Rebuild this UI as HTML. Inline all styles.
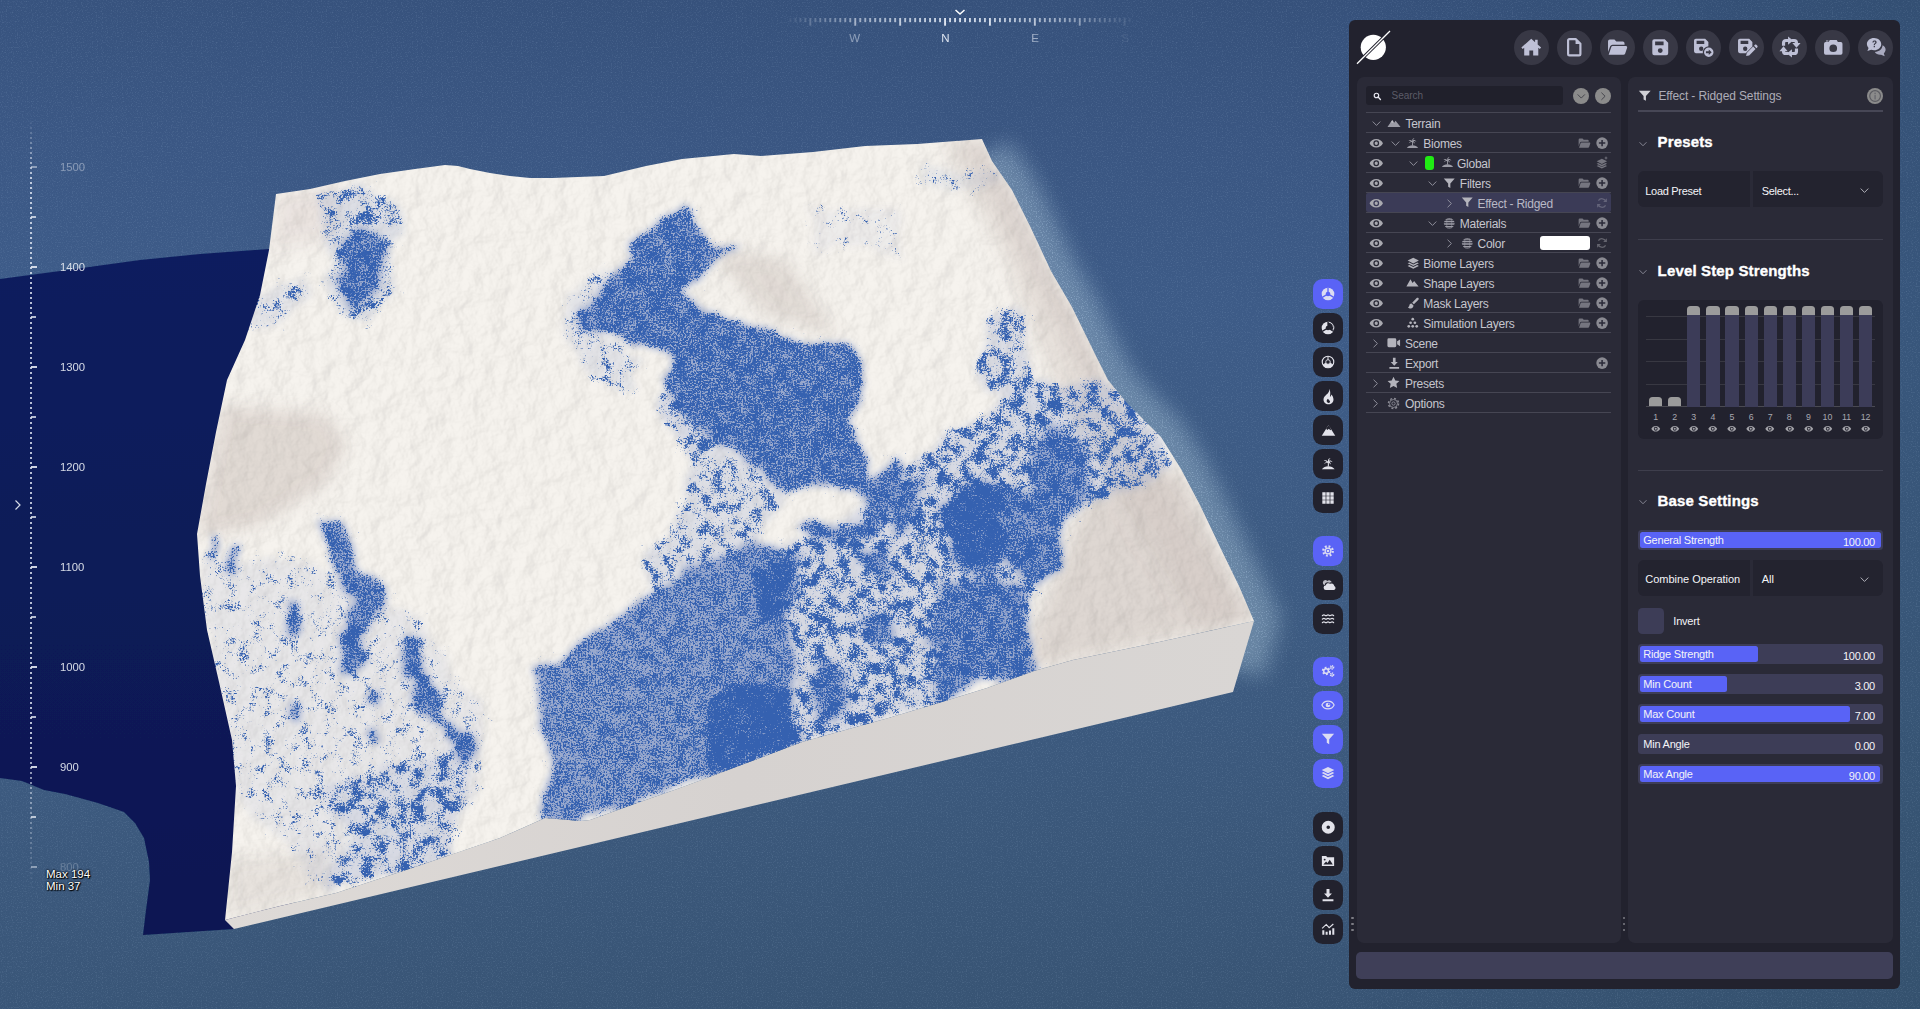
<!DOCTYPE html>
<html><head><meta charset="utf-8"><title>Terrain Editor</title><style>
html,body{margin:0;padding:0}
body{width:1920px;height:1009px;overflow:hidden;position:relative;background:#3c5a85;font-family:"Liberation Sans",sans-serif}
#scene{position:absolute;left:0;top:0}
.i{position:absolute;overflow:visible}
.t{position:absolute;white-space:nowrap;font-size:12px;line-height:20px;color:#c6c6ce;letter-spacing:-.25px}
.t.w{color:#f4f4f8;font-size:11px;letter-spacing:-.2px}
.t.h{color:#fff;font-weight:bold;-webkit-text-stroke:.35px #fff;font-size:15px;line-height:22px;letter-spacing:.15px}
.ruler{position:absolute;left:30.300px;top:117px;width:2px;height:775px;background:repeating-linear-gradient(180deg,rgba(226,232,244,.8) 0,rgba(226,232,244,.8) 2px,transparent 2px,transparent 5px);-webkit-mask-image:linear-gradient(180deg,transparent 0,#000 8%,#000 80%,rgba(0,0,0,.5) 90%,transparent 100%)}
.tk{position:absolute;left:31px;height:2px;background:#dde3ee}
.rl{position:absolute;left:60px;font-size:11.300px;line-height:20px;color:#e4e8f0}
.mm{position:absolute;font-size:11.500px;line-height:12px;color:#fff;text-shadow:0 0 2px #000,0 0 2px #000,1px 1px 1px #000}
.tbb{position:absolute;left:1313.300px;width:29.500px;height:29.500px;border-radius:9.500px}
.panel{position:absolute;left:1349px;top:19.700px;width:551px;height:969px;background:#22222e;border-radius:6px}
.cb{position:absolute;width:35px;height:35px;border-radius:50%;background:#383845}
.ip{position:absolute;top:77.300px;height:866px;background:#2a2a37;border-radius:7px}
.dd{position:absolute;width:2.200px;height:2.200px;border-radius:50%;background:#7c7c84}
.bbar{position:absolute;left:1356px;top:952.200px;width:537px;height:26.600px;border-radius:5px;background:#3f3f58}
.sbox{position:absolute;left:1365.800px;top:85.500px;width:196.800px;height:19px;border-radius:3px;background:#20202b}
.gc{position:absolute;width:16.200px;height:16.200px;border-radius:50%;background:#8b8b8b}
.sep{position:absolute;left:1365.800px;width:245.200px;height:1px;background:#464653}
.hl{position:absolute;left:1365.800px;top:192.800px;width:245.200px;height:19.600px;background:#3b3b57;border-radius:2px}
.pill{position:absolute;left:1424.500px;top:156px;width:9px;height:14px;border-radius:3px;background:#20ec14}
.wbox{position:absolute;left:1540px;top:235.800px;width:50px;height:14.200px;border-radius:3px;background:#fff}
.rs{position:absolute;left:1638px;width:245px;height:1px;background:#3e3e4c}
.sl,.sr{position:absolute;height:35.600px;background:#23232f}
.sl{left:1638px;width:112px;border-radius:6px 0 0 6px}
.sr{left:1753px;width:130px;border-radius:0 6px 6px 0}
.chart{position:absolute;left:1638px;top:299.700px;width:245px;height:139.300px;border-radius:6px;background:#22222e}
.gl{position:absolute;left:1645.800px;width:229.400px;height:1px;background:#383842}
.bar{position:absolute;top:314.500px;width:13.300px;height:92px;background:#3c3c58}
.cap{position:absolute;width:13.300px;background:#9b9b9b;border-radius:3.500px 3.500px 0 0}
.cn{position:absolute;top:411.400px;width:20px;text-align:center;font-size:8.800px;line-height:12px;color:#a8a8b0}
.so{position:absolute;left:1638px;width:245px;height:19.500px;border-radius:3.500px;background:#3d3d57}
.sf{position:absolute;left:1640.400px;height:15.400px;border-radius:2.500px;background:#5963f6}
.cbx{position:absolute;left:1638.300px;top:608.200px;width:25.700px;height:25.400px;border-radius:4.500px;background:#3d3d57}
</style></head><body>
<svg id="scene" width="1920" height="1009" viewBox="0 0 1920 1009">
<defs>
<linearGradient id="bg" x1="0" y1="0" x2="0" y2="1">
<stop offset="0" stop-color="#36517b"/><stop offset=".14" stop-color="#3a5682"/><stop offset=".3" stop-color="#3d5b87"/><stop offset=".6" stop-color="#3d5b82"/><stop offset=".8" stop-color="#3b587b"/><stop offset="1" stop-color="#385474"/></linearGradient>
<linearGradient id="bgh" x1="0" y1="0" x2="1" y2="0"><stop offset="0" stop-color="#4a6ca6" stop-opacity=".08"/><stop offset=".45" stop-color="#4a6ca6" stop-opacity="0"/><stop offset=".7" stop-color="#2c4a60" stop-opacity="0"/><stop offset="1" stop-color="#2c4a60" stop-opacity=".3"/></linearGradient>
<linearGradient id="shg" x1="0" y1="0" x2="0" y2="1"><stop offset="0" stop-color="#0d1e5e"/><stop offset="1" stop-color="#091752"/></linearGradient>
<linearGradient id="sideg" x1="0" y1="0" x2="1" y2="0"><stop offset="0" stop-color="#dedad7"/><stop offset=".5" stop-color="#d6d2d0"/><stop offset="1" stop-color="#d9d6d4"/></linearGradient>
<clipPath id="topclip"><polygon points="276,194 310,189 345,181 380,174 415,169 445,165 458,166 470,169 490,173 510,176 530,178 552,178 578,177 604,176 625,171 646,166 682,159 734,154 761,156 813,152 865,146 891,145 917,144 982,139 992,161 1012,190 1030,226 1051,271 1072,307 1095,354 1108,380 1127,403 1161,437 1181,469 1200,505 1220,547 1239,586 1254,621 1200,633 1150,644 1073,660 1034,671 987,688 942,702 885,719 802,742 760,758 720,773 680,788 640,802 590,820 581,821 545,818 500,838 412,868 336,893 280,906 225,920 228,891 232,852 236,786 232,740 219,682 207,630 200,576 197,534 206,484 216,432 227,380 245,340 260,295 269,250"/></clipPath>
<filter id="fblue" filterUnits="userSpaceOnUse" x="180" y="120" width="1100" height="830" color-interpolation-filters="sRGB">
<feTurbulence type="fractalNoise" baseFrequency="0.018" numOctaves="4" seed="7" result="n1"/>
<feDisplacementMap in="SourceGraphic" in2="n1" scale="34" xChannelSelector="R" yChannelSelector="G" result="d"/>
<feGaussianBlur in="d" stdDeviation="2.5" result="soft"/>
<feTurbulence type="fractalNoise" baseFrequency="0.08" numOctaves="3" seed="21" result="n3"/>
<feColorMatrix in="n3" type="matrix" values="0 0 0 0 0 0 0 0 0 0 0 0 0 0 0 1.8 0 0 0 -0.4" result="a3"/>
<feTurbulence type="fractalNoise" baseFrequency="0.6" numOctaves="2" seed="3" result="n2"/>
<feColorMatrix in="n2" type="matrix" values="0 0 0 0 0 0 0 0 0 0 0 0 0 0 0 0 1.8 0 0 -0.4" result="a2"/>
<feComposite in="soft" in2="a3" operator="arithmetic" k1="0" k2="1" k3="0.7" k4="-0.35" result="s1"/>
<feComposite in="s1" in2="a2" operator="arithmetic" k1="0" k2="1" k3="0.6" k4="-0.3" result="s2"/>
<feComponentTransfer in="s2" result="th"><feFuncA type="linear" slope="4" intercept="-1.75"/></feComponentTransfer>
<feGaussianBlur in="d" stdDeviation="7" result="w"/>
<feComponentTransfer in="w" result="wm"><feFuncA type="linear" slope="40" intercept="-0.6"/></feComponentTransfer>
<feComposite in="th" in2="wm" operator="in" result="th2"/>
<feFlood flood-color="#3561b0" result="col"/>
<feComposite in="col" in2="th2" operator="in"/>
</filter>
<filter id="fblue2" filterUnits="userSpaceOnUse" x="180" y="120" width="1100" height="830" color-interpolation-filters="sRGB">
<feTurbulence type="fractalNoise" baseFrequency="0.018" numOctaves="4" seed="7" result="n1"/>
<feDisplacementMap in="SourceGraphic" in2="n1" scale="34" xChannelSelector="R" yChannelSelector="G" result="d"/>
<feGaussianBlur in="d" stdDeviation="2.5" result="soft"/>
<feTurbulence type="fractalNoise" baseFrequency="0.08" numOctaves="3" seed="21" result="n3"/>
<feColorMatrix in="n3" type="matrix" values="0 0 0 0 0 0 0 0 0 0 0 0 0 0 0 1.8 0 0 0 -0.4" result="a3"/>
<feTurbulence type="fractalNoise" baseFrequency="0.6" numOctaves="2" seed="3" result="n2"/>
<feColorMatrix in="n2" type="matrix" values="0 0 0 0 0 0 0 0 0 0 0 0 0 0 0 0 1.8 0 0 -0.4" result="a2"/>
<feComposite in="soft" in2="a3" operator="arithmetic" k1="0" k2="1" k3="0.32" k4="-0.16" result="s1"/>
<feComposite in="s1" in2="a2" operator="arithmetic" k1="0" k2="1" k3="0.8" k4="-0.4" result="s2"/>
<feComponentTransfer in="s2" result="th"><feFuncA type="linear" slope="4" intercept="-1.75"/></feComponentTransfer>
<feGaussianBlur in="d" stdDeviation="7" result="w"/>
<feComponentTransfer in="w" result="wm"><feFuncA type="linear" slope="40" intercept="-0.6"/></feComponentTransfer>
<feComposite in="th" in2="wm" operator="in" result="th2"/>
<feFlood flood-color="#3561b0" result="col"/>
<feComposite in="col" in2="th2" operator="in"/>
</filter>
<filter id="fsnow" filterUnits="userSpaceOnUse" x="180" y="120" width="1100" height="830" color-interpolation-filters="sRGB">
<feTurbulence type="fractalNoise" baseFrequency="0.05" numOctaves="5" seed="11" result="n"/>
<feDiffuseLighting in="n" surfaceScale="6" diffuseConstant="1" lighting-color="#ffffff" result="l"><feDistantLight azimuth="20" elevation="55"/></feDiffuseLighting>
<feComposite in="l" in2="SourceAlpha" operator="in"/>
</filter>
<filter id="fgrain" filterUnits="userSpaceOnUse" x="0" y="0" width="1920" height="1009" color-interpolation-filters="sRGB">
<feTurbulence type="fractalNoise" baseFrequency="0.8" numOctaves="1" seed="5" result="n"/>
<feColorMatrix in="n" type="matrix" values="0 0 0 0 .75 0 0 0 0 .85 0 0 0 0 .95 0 0 0 3 -1.55"/>
</filter>
<filter id="b7" filterUnits="userSpaceOnUse" x="180" y="120" width="1100" height="830"><feTurbulence type="fractalNoise" baseFrequency="0.018" numOctaves="4" seed="7" result="n1"/><feDisplacementMap in="SourceGraphic" in2="n1" scale="34" xChannelSelector="R" yChannelSelector="G" result="d"/><feGaussianBlur in="d" stdDeviation="3.5"/></filter>
<filter id="b8" filterUnits="userSpaceOnUse" x="180" y="120" width="1100" height="830"><feTurbulence type="fractalNoise" baseFrequency="0.05" numOctaves="4" seed="4" result="n1"/><feDisplacementMap in="SourceGraphic" in2="n1" scale="22" xChannelSelector="R" yChannelSelector="G" result="d"/><feGaussianBlur in="d" stdDeviation="1.6"/></filter>
<filter id="b6"><feGaussianBlur stdDeviation="8"/></filter>
<filter id="b14" x="-50%" y="-50%" width="200%" height="200%"><feGaussianBlur stdDeviation="10"/></filter>
<filter id="b1"><feGaussianBlur stdDeviation="0.6"/></filter>
<mask id="glowmask"><rect width="1920" height="1009" fill="#000"/><polyline points="988,152 992,161 1012,190 1030,226 1051,271 1072,307 1095,354 1108,380 1127,403 1161,437 1181,469 1200,505 1220,547 1239,586 1254,621 1240,670" fill="none" stroke="#fff" stroke-width="50" filter="url(#b14)"/></mask>
</defs>
<rect width="1920" height="1009" fill="url(#bg)"/><rect width="1920" height="1009" fill="url(#bgh)"/>
<rect width="1920" height="1009" fill="#fff" filter="url(#fgrain)" opacity=".15"/>
<g mask="url(#glowmask)"><rect x="900" y="100" width="500" height="700" fill="#a9c6d6" opacity=".4"/><rect x="900" y="100" width="500" height="700" fill="#fff" filter="url(#fgrain)" opacity=".35"/></g>
<polygon points="0,279 60,271 140,260 200,254 269,249 300,250 300,900 234,929 143,935 146,910 150,880 149,862 144,838 135,823 124,812 98,803 65,794 44,790 22,781 0,778" fill="url(#shg)" filter="url(#b1)"/>
<polygon points="1254,621 1200,633 1150,644 1073,660 1034,671 987,688 942,702 885,719 802,742 760,758 720,773 680,788 640,802 590,820 581,821 545,818 500,838 412,868 336,893 280,906 225,920 234,929 1233,692" fill="url(#sideg)"/>
<g clip-path="url(#topclip)">
<rect x="180" y="120" width="1100" height="830" fill="#f6f3ee"/>
<g filter="url(#b6)">
<polygon points="222,406 326,414 347,445 326,484 258,526 197,536" fill="#cfc5bf" opacity="0.55"/>
<polygon points="940,139 982,139 1108,380 1254,621 1200,633 1130,520 1060,400 1000,250" fill="#cfc5bf" opacity="0.4"/>
<polygon points="966,140 982,139 992,161 1012,190 1030,226 1051,271 1072,307 1095,354 1108,380 1090,384 1070,345 1046,300 1024,255 1004,215 985,180" fill="#d3cac5" opacity="0.75"/>
<polygon points="1082,508 1120,480 1181,469 1254,621 1073,660 1034,671 1030,640 1062,560" fill="#cfc5bf" opacity="0.6"/>
<polygon points="708,247 787,260 839,338 761,312" fill="#cfc5bf" opacity="0.5"/>
<polygon points="225,860 330,850 330,893 225,920" fill="#cfc5bf" opacity="0.35"/>
<polygon points="276,194 340,185 330,240 270,250" fill="#cfc5bf" opacity="0.3"/>
</g>
<rect x="180" y="120" width="1100" height="830" fill="#fff" filter="url(#fsnow)" opacity=".09" style="mix-blend-mode:multiply"/>
<g filter="url(#b7)">
<polygon points="350,227 370,235 385,250 380,280 362,305 350,308 337,285 334,260 342,240" fill="#8a9cc8" opacity="0.85"/>
<polygon points="320,200 360,190 400,200 405,235 390,250 395,290 370,320 340,315 325,280 330,240" fill="#8a9cc8" opacity="0.23"/>
<polygon points="255,290 300,285 310,310 270,330 250,320" fill="#8a9cc8" opacity="0.17"/>
<polygon points="682,206 667,213 622,234 630,252 609,276 581,307 589,323 622,338 667,354 656,380 682,401 703,424 709,443 735,453 761,469 787,489 820,490 852,484 870,470 860,440 849,427 860,406 865,380 865,370 847,351 808,344 761,328 708,312 688,292 698,276 727,252 745,237 722,245 690,229" fill="#8a9cc8" opacity="0.85"/>
<polygon points="662,393 700,400 712,445 690,450 665,420" fill="#8a9cc8" opacity="0.28"/>
<polygon points="690,440 760,470 790,500 760,535 700,570 660,600 640,560 690,500" fill="#8a9cc8" opacity="0.22"/>
<polygon points="560,290 600,270 600,330 640,360 640,400 600,380 570,340" fill="#8a9cc8" opacity="0.17"/>
<polygon points="755,534 719,557 682,578 646,599 597,630 579,643 535,680 542,734 548,776 545,818 581,821 680,788 760,758 802,742 800,700 776,604 795,573 787,557" fill="#8a9cc8" opacity="0.85"/>
<polygon points="742,560 800,540 900,466 978,414 1017,385 1108,380 1127,403 1161,437 1174,466 1108,497 1082,508 1056,562 1030,588 1030,643 1034,671 987,688 942,702 885,719 802,742 790,650" fill="#8a9cc8" opacity="0.28"/>
<polygon points="942,510 965,489 1004,484 1025,489 1046,432 1082,440 1093,458 1093,489 1077,515 1061,557 1030,583 1009,562 978,568 947,547" fill="#8a9cc8" opacity="0.85"/>
<polygon points="900,484 921,479 916,536 900,541" fill="#8a9cc8" opacity="0.85"/>
<polygon points="947,588 1025,583 1030,640 1034,664 974,690 932,701 940,659 922,638" fill="#8a9cc8" opacity="0.85"/>
<polygon points="855,479 891,458 901,495 905,515 880,526 839,536 808,542 797,526 839,521 870,510" fill="#8a9cc8" opacity="0.85"/>
<polygon points="943,505 969,484 1000,484 1000,589 982,578 956,562 943,526" fill="#8a9cc8" opacity="0.85"/>
<polygon points="855,542 886,547 886,578 865,573" fill="#8a9cc8" opacity="0.85"/>
<polygon points="760,560 799,560 786,612 760,625" fill="#8a9cc8" opacity="0.85"/>
<polygon points="760,706 794,716 802,740 760,755" fill="#8a9cc8" opacity="0.85"/>
<polygon points="864,612 895,617 901,646 877,646" fill="#8a9cc8" opacity="0.85"/>
<polygon points="820,659 846,669 838,716 820,727" fill="#8a9cc8" opacity="0.85"/>
<polygon points="702,696 800,690 800,745 740,765 705,769" fill="#8a9cc8" opacity="0.85"/>
<polygon points="985,318 1015,305 1033,330 1033,370 1020,393 990,393 975,360" fill="#8a9cc8" opacity="0.25"/>
<polygon points="924,168 1000,170 1005,190 930,188" fill="#8a9cc8" opacity="0.14"/>
<polygon points="804,204 903,210 903,255 810,250" fill="#8a9cc8" opacity="0.08"/>
<polygon points="317,517 334,515 360,547 356,560 386,585 382,612 366,638 346,638 348,602 332,568 321,538" fill="#8a9cc8" opacity="0.85"/>
<polygon points="339,630 362,630 360,677 342,680" fill="#8a9cc8" opacity="0.85"/>
<polygon points="404,640 422,638 422,669 441,690 441,713 456,729 475,740 475,760 461,776 451,740 430,716 412,695 415,680 402,682" fill="#8a9cc8" opacity="0.85"/>
<polygon points="206,547 214,547 214,562 206,562" fill="#8a9cc8" opacity="0.85"/>
<polygon points="230,549 240,549 240,573 230,573" fill="#8a9cc8" opacity="0.85"/>
<polygon points="287,599 302,599 302,635 287,635" fill="#8a9cc8" opacity="0.85"/>
<polygon points="287,698 300,698 300,716 287,716" fill="#8a9cc8" opacity="0.85"/>
<polygon points="368,692 383,692 383,708 368,708" fill="#8a9cc8" opacity="0.85"/>
<polygon points="362,734 373,734 373,747 362,747" fill="#8a9cc8" opacity="0.85"/>
<polygon points="200,560 300,560 420,620 480,700 480,800 440,860 330,890 240,800 215,680" fill="#8a9cc8" opacity="0.13"/>
<polygon points="323,786 467,747 467,812 441,859 412,870 323,891 347,838" fill="#8a9cc8" opacity="0.17"/>
</g>
<g filter="url(#fblue)">
<polygon points="320,200 360,190 400,200 405,235 390,250 395,290 370,320 340,315 325,280 330,240" fill="#000" fill-opacity="0.42"/>
<polygon points="255,290 300,285 310,310 270,330 250,320" fill="#000" fill-opacity="0.3"/>
<polygon points="662,393 700,400 712,445 690,450 665,420" fill="#000" fill-opacity="0.5"/>
<polygon points="690,440 760,470 790,500 760,535 700,570 660,600 640,560 690,500" fill="#000" fill-opacity="0.4"/>
<polygon points="560,290 600,270 600,330 640,360 640,400 600,380 570,340" fill="#000" fill-opacity="0.3"/>
<polygon points="742,560 800,540 900,466 978,414 1017,385 1108,380 1127,403 1161,437 1174,466 1108,497 1082,508 1056,562 1030,588 1030,643 1034,671 987,688 942,702 885,719 802,742 790,650" fill="#000" fill-opacity="0.5"/>
<polygon points="985,318 1015,305 1033,330 1033,370 1020,393 990,393 975,360" fill="#000" fill-opacity="0.45"/>
<polygon points="924,168 1000,170 1005,190 930,188" fill="#000" fill-opacity="0.25"/>
<polygon points="804,204 903,210 903,255 810,250" fill="#000" fill-opacity="0.15"/>
<polygon points="200,560 300,560 420,620 480,700 480,800 440,860 330,890 240,800 215,680" fill="#000" fill-opacity="0.24"/>
<polygon points="323,786 467,747 467,812 441,859 412,870 323,891 347,838" fill="#000" fill-opacity="0.3"/>
</g>
<g filter="url(#fblue2)">
<polygon points="350,227 370,235 385,250 380,280 362,305 350,308 337,285 334,260 342,240" fill="#000" fill-opacity="0.664"/>
<polygon points="682,206 667,213 622,234 630,252 609,276 581,307 589,323 622,338 667,354 656,380 682,401 703,424 709,443 735,453 761,469 787,489 820,490 852,484 870,470 860,440 849,427 860,406 865,380 865,370 847,351 808,344 761,328 708,312 688,292 698,276 727,252 745,237 722,245 690,229" fill="#000" fill-opacity="0.664"/>
<polygon points="755,534 719,557 682,578 646,599 597,630 579,643 535,680 542,734 548,776 545,818 581,821 680,788 760,758 802,742 800,700 776,604 795,573 787,557" fill="#000" fill-opacity="0.553"/>
<polygon points="942,510 965,489 1004,484 1025,489 1046,432 1082,440 1093,458 1093,489 1077,515 1061,557 1030,583 1009,562 978,568 947,547" fill="#000" fill-opacity="0.632"/>
<polygon points="900,484 921,479 916,536 900,541" fill="#000" fill-opacity="0.632"/>
<polygon points="947,588 1025,583 1030,640 1034,664 974,690 932,701 940,659 922,638" fill="#000" fill-opacity="0.632"/>
<polygon points="855,479 891,458 901,495 905,515 880,526 839,536 808,542 797,526 839,521 870,510" fill="#000" fill-opacity="0.632"/>
<polygon points="943,505 969,484 1000,484 1000,589 982,578 956,562 943,526" fill="#000" fill-opacity="0.632"/>
<polygon points="855,542 886,547 886,578 865,573" fill="#000" fill-opacity="0.632"/>
<polygon points="760,560 799,560 786,612 760,625" fill="#000" fill-opacity="0.632"/>
<polygon points="760,706 794,716 802,740 760,755" fill="#000" fill-opacity="0.632"/>
<polygon points="864,612 895,617 901,646 877,646" fill="#000" fill-opacity="0.632"/>
<polygon points="820,659 846,669 838,716 820,727" fill="#000" fill-opacity="0.632"/>
<polygon points="702,696 800,690 800,745 740,765 705,769" fill="#000" fill-opacity="0.632"/>
<polygon points="317,517 334,515 360,547 356,560 386,585 382,612 366,638 346,638 348,602 332,568 321,538" fill="#000" fill-opacity="0.632"/>
<polygon points="339,630 362,630 360,677 342,680" fill="#000" fill-opacity="0.664"/>
<polygon points="404,640 422,638 422,669 441,690 441,713 456,729 475,740 475,760 461,776 451,740 430,716 412,695 415,680 402,682" fill="#000" fill-opacity="0.664"/>
<polygon points="206,547 214,547 214,562 206,562" fill="#000" fill-opacity="0.632"/>
<polygon points="230,549 240,549 240,573 230,573" fill="#000" fill-opacity="0.632"/>
<polygon points="287,599 302,599 302,635 287,635" fill="#000" fill-opacity="0.632"/>
<polygon points="287,698 300,698 300,716 287,716" fill="#000" fill-opacity="0.632"/>
<polygon points="368,692 383,692 383,708 368,708" fill="#000" fill-opacity="0.632"/>
<polygon points="362,734 373,734 373,747 362,747" fill="#000" fill-opacity="0.632"/>
</g>
</g>
</svg>
<div class="ruler"></div>
<div class="tk" style="top:165.7px;width:6px;opacity:0.5"></div>
<span class="rl" style="top:156.7px;opacity:0.45">1500</span>
<div class="tk" style="top:215.7px;width:5px;opacity:.8"></div>
<div class="tk" style="top:265.7px;width:6px;opacity:0.92"></div>
<span class="rl" style="top:256.7px;opacity:0.92">1400</span>
<div class="tk" style="top:315.7px;width:5px;opacity:.8"></div>
<div class="tk" style="top:365.7px;width:6px;opacity:0.92"></div>
<span class="rl" style="top:356.7px;opacity:0.92">1300</span>
<div class="tk" style="top:415.7px;width:5px;opacity:.8"></div>
<div class="tk" style="top:465.7px;width:6px;opacity:0.92"></div>
<span class="rl" style="top:456.7px;opacity:0.92">1200</span>
<div class="tk" style="top:515.7px;width:5px;opacity:.8"></div>
<div class="tk" style="top:565.7px;width:6px;opacity:0.92"></div>
<span class="rl" style="top:556.7px;opacity:0.92">1100</span>
<div class="tk" style="top:615.7px;width:5px;opacity:.8"></div>
<div class="tk" style="top:665.7px;width:6px;opacity:0.92"></div>
<span class="rl" style="top:656.7px;opacity:0.92">1000</span>
<div class="tk" style="top:715.7px;width:5px;opacity:.8"></div>
<div class="tk" style="top:765.7px;width:6px;opacity:0.92"></div>
<span class="rl" style="top:756.7px;opacity:0.92">900</span>
<div class="tk" style="top:815.7px;width:5px;opacity:.8"></div>
<div class="tk" style="top:865.7px;width:6px;opacity:0.5"></div>
<span class="rl" style="top:856.7px;opacity:0.25">800</span>
<span class="mm" style="left:46px;top:868px">Max 194</span><span class="mm" style="left:46px;top:880px">Min 37</span>
<svg class="i" style="left:13px;top:499px" width="10" height="12" viewBox="0 0 10 12"><polyline points="2.500,1.500 7,6 2.500,10.500" fill="none" stroke="#d5dbe8" stroke-width="1.200"/></svg>
<svg class="i" style="left:780px;top:0" width="360" height="50" viewBox="780 0 360 50"><defs><linearGradient id="cf" x1="0" x2="1"><stop offset="0" stop-color="#fff" stop-opacity="0"/><stop offset=".22" stop-color="#fff" stop-opacity=".65"/><stop offset=".5" stop-color="#fff" stop-opacity="1"/><stop offset=".78" stop-color="#fff" stop-opacity=".65"/><stop offset="1" stop-color="#fff" stop-opacity="0"/></linearGradient><mask id="cm"><rect x="780" y="0" width="360" height="50" fill="url(#cf)"/></mask></defs><g mask="url(#cm)" fill="#e6ecf6"><rect x="789.4" y="18" width="1.900" height="4.2" opacity="0.9"/><rect x="794.4" y="18" width="1.900" height="4.2" opacity="0.9"/><rect x="799.4" y="18" width="1.900" height="4.2" opacity="0.9"/><rect x="804.4" y="18" width="1.900" height="4.2" opacity="0.9"/><rect x="809.4" y="18" width="1.900" height="7.7" opacity="1"/><rect x="814.4" y="18" width="1.900" height="4.2" opacity="0.9"/><rect x="819.3" y="18" width="1.900" height="4.2" opacity="0.9"/><rect x="824.3" y="18" width="1.900" height="4.2" opacity="0.9"/><rect x="829.3" y="18" width="1.900" height="4.2" opacity="0.9"/><rect x="834.3" y="18" width="1.900" height="4.2" opacity="0.9"/><rect x="839.3" y="18" width="1.900" height="4.2" opacity="0.9"/><rect x="844.3" y="18" width="1.900" height="4.2" opacity="0.9"/><rect x="849.3" y="18" width="1.900" height="4.2" opacity="0.9"/><rect x="854.3" y="18" width="1.900" height="7.7" opacity="1"/><rect x="859.3" y="18" width="1.900" height="4.2" opacity="0.9"/><rect x="864.3" y="18" width="1.900" height="4.2" opacity="0.9"/><rect x="869.2" y="18" width="1.900" height="4.2" opacity="0.9"/><rect x="874.2" y="18" width="1.900" height="4.2" opacity="0.9"/><rect x="879.2" y="18" width="1.900" height="4.2" opacity="0.9"/><rect x="884.2" y="18" width="1.900" height="4.2" opacity="0.9"/><rect x="889.2" y="18" width="1.900" height="4.2" opacity="0.9"/><rect x="894.2" y="18" width="1.900" height="4.2" opacity="0.9"/><rect x="899.2" y="18" width="1.900" height="7.7" opacity="1"/><rect x="904.2" y="18" width="1.900" height="4.2" opacity="0.9"/><rect x="909.2" y="18" width="1.900" height="4.2" opacity="0.9"/><rect x="914.2" y="18" width="1.900" height="4.2" opacity="0.9"/><rect x="919.1" y="18" width="1.900" height="4.2" opacity="0.9"/><rect x="924.1" y="18" width="1.900" height="4.2" opacity="0.9"/><rect x="929.1" y="18" width="1.900" height="4.2" opacity="0.9"/><rect x="934.1" y="18" width="1.900" height="4.2" opacity="0.9"/><rect x="939.1" y="18" width="1.900" height="4.2" opacity="0.9"/><rect x="944.1" y="18" width="1.900" height="7.7" opacity="1"/><rect x="949.1" y="18" width="1.900" height="4.2" opacity="0.9"/><rect x="954.1" y="18" width="1.900" height="4.2" opacity="0.9"/><rect x="959.1" y="18" width="1.900" height="4.2" opacity="0.9"/><rect x="964.1" y="18" width="1.900" height="4.2" opacity="0.9"/><rect x="969.0" y="18" width="1.900" height="4.2" opacity="0.9"/><rect x="974.0" y="18" width="1.900" height="4.2" opacity="0.9"/><rect x="979.0" y="18" width="1.900" height="4.2" opacity="0.9"/><rect x="984.0" y="18" width="1.900" height="4.2" opacity="0.9"/><rect x="989.0" y="18" width="1.900" height="7.7" opacity="1"/><rect x="994.0" y="18" width="1.900" height="4.2" opacity="0.9"/><rect x="999.0" y="18" width="1.900" height="4.2" opacity="0.9"/><rect x="1004.0" y="18" width="1.900" height="4.2" opacity="0.9"/><rect x="1009.0" y="18" width="1.900" height="4.2" opacity="0.9"/><rect x="1014.0" y="18" width="1.900" height="4.2" opacity="0.9"/><rect x="1018.9" y="18" width="1.900" height="4.2" opacity="0.9"/><rect x="1023.9" y="18" width="1.900" height="4.2" opacity="0.9"/><rect x="1028.9" y="18" width="1.900" height="4.2" opacity="0.9"/><rect x="1033.9" y="18" width="1.900" height="7.7" opacity="1"/><rect x="1038.9" y="18" width="1.900" height="4.2" opacity="0.9"/><rect x="1043.9" y="18" width="1.900" height="4.2" opacity="0.9"/><rect x="1048.9" y="18" width="1.900" height="4.2" opacity="0.9"/><rect x="1053.9" y="18" width="1.900" height="4.2" opacity="0.9"/><rect x="1058.9" y="18" width="1.900" height="4.2" opacity="0.9"/><rect x="1063.9" y="18" width="1.900" height="4.2" opacity="0.9"/><rect x="1068.8" y="18" width="1.900" height="4.2" opacity="0.9"/><rect x="1073.8" y="18" width="1.900" height="4.2" opacity="0.9"/><rect x="1078.8" y="18" width="1.900" height="7.7" opacity="1"/><rect x="1083.8" y="18" width="1.900" height="4.2" opacity="0.9"/><rect x="1088.8" y="18" width="1.900" height="4.2" opacity="0.9"/><rect x="1093.8" y="18" width="1.900" height="4.2" opacity="0.9"/><rect x="1098.8" y="18" width="1.900" height="4.2" opacity="0.9"/><rect x="1103.8" y="18" width="1.900" height="4.2" opacity="0.9"/><rect x="1108.8" y="18" width="1.900" height="4.2" opacity="0.9"/><rect x="1113.8" y="18" width="1.900" height="4.2" opacity="0.9"/><rect x="1118.7" y="18" width="1.900" height="4.2" opacity="0.9"/><rect x="1123.7" y="18" width="1.900" height="7.7" opacity="1"/><rect x="1128.7" y="18" width="1.900" height="4.2" opacity="0.9"/><text x="854.7" y="41.600" text-anchor="middle" font-family="Liberation Sans,sans-serif" font-size="11.500" opacity="0.8">W</text><text x="945.4" y="41.600" text-anchor="middle" font-family="Liberation Sans,sans-serif" font-size="11.500" opacity="1">N</text><text x="1035.2" y="41.600" text-anchor="middle" font-family="Liberation Sans,sans-serif" font-size="11.500" opacity="0.8">E</text><text x="1125.3" y="41.600" text-anchor="middle" font-family="Liberation Sans,sans-serif" font-size="11.500" opacity="0.8">S</text></g><polyline points="955.500,10 960,14 964.500,10" fill="none" stroke="#fff" stroke-width="1.500"/></svg>
<div class="tbb" style="top:279.4px;background:#5a63f6"></div>
<svg class="i" style="left:1321.1px;top:287.1px;color:#dcdcf2;fill:#dcdcf2" width="14" height="14" viewBox="0 0 16 16"><circle cx="8" cy="8" r="7.200"/><path d="M8 8V.8M8 8 1.800 11.600M8 8l6.200 3.600" stroke="#5a63f6" stroke-width="1.500" fill="none"/><circle cx="8" cy="8" r="2.700" fill="#5a63f6"/></svg>
<div class="tbb" style="top:313.4px;background:#22222e"></div>
<svg class="i" style="left:1321.1px;top:321.1px;color:#e2e2ea;fill:#e2e2ea" width="14" height="14" viewBox="0 0 16 16"><circle cx="8" cy="8" r="7.200"/><path d="M8 8V.8A7.200 7.200 0 0 1 14.200 11.600z" fill="#22222e"/><path d="M8 8V.8M8 8 1.800 11.600M8 8l6.200 3.600" stroke="#22222e" stroke-width="1.500" fill="none"/><circle cx="8" cy="8" r="2.700" fill="#22222e"/><path d="M8.800 1.200A6.800 6.800 0 0 1 13.800 10.600" fill="none" stroke="currentColor" stroke-width="1.100"/></svg>
<div class="tbb" style="top:347.4px;background:#22222e"></div>
<svg class="i" style="left:1321.1px;top:355.1px;color:#e2e2ea;fill:#e2e2ea" width="14" height="14" viewBox="0 0 16 16"><circle cx="8" cy="8" r="6.600" fill="none" stroke="currentColor" stroke-width="1.300"/><path d="M2.300 11.300A6.600 6.600 0 0 0 13.700 11.300L8 8z"/><path d="M8 8V1.400M8 8 2.300 11.300M8 8l5.700 3.300" stroke="currentColor" stroke-width="1.200" fill="none"/><circle cx="8" cy="8" r="2.600" fill="#22222e" stroke="currentColor" stroke-width="1"/></svg>
<div class="tbb" style="top:381.4px;background:#22222e"></div>
<svg class="i" style="left:1319.6px;top:387.6px;color:#e2e2ea;fill:#e2e2ea" width="17" height="17" viewBox="0 0 16 16"><path fill-rule="evenodd" d="M8.700.6C9.200 3.200 7.700 4.600 6.100 6.200 4.600 7.700 3.300 9 3.300 10.900 3.300 13.500 5.400 15.400 8 15.400s4.700-1.900 4.700-4.500c0-1.900-.8-3.500-2.100-4.800-.1 1.100-.5 1.800-1.300 2.300C9.800 5.800 10 2.900 8.700.6zM8.100 14c-1 0-1.800-.7-1.800-1.700 0-.9.500-1.500 1.200-2.100.4.800 1 1.100 1.600 1.700.5.500.5 2.100-1 2.100z"/></svg>
<div class="tbb" style="top:415.4px;background:#22222e"></div>
<svg class="i" style="left:1320.6px;top:422.6px;color:#e2e2ea;fill:#e2e2ea" width="15" height="15" viewBox="0 0 16 16"><path d="M8 2 .8 13.500h14.400z"/><path d="M8 2 5.400 6.200l1.400 1.200L8.300 6l1.700 1.600.8-.9z" fill="#22222e"/><path d="M8.700 3.200l1 1.400M7.200 5.300l.9-.6.6.8" stroke="#22222e" stroke-width=".7" fill="none"/></svg>
<div class="tbb" style="top:449.4px;background:#22222e"></div>
<svg class="i" style="left:1320.8px;top:456.8px;color:#e2e2ea;fill:#e2e2ea" width="14.5" height="14.5" viewBox="0 0 16 16"><path d="M1 13.500c1.500-2.300 4-3.400 7-3.400s5.500 1.100 7 3.400z"/><path d="M7.400 10.500c.3-2 .3-3.800-.2-5.600l1.100-.2c.6 2 .6 3.900.3 5.800z"/><path d="M7.700 5.200C6.400 3.600 4.700 3.300 3 4.200c1.400 0 2.600.5 3.600 1.500C5.200 5.600 4.100 6.300 3.500 7.700c1.200-1 2.700-1.500 4.200-1.400 1.300.2 2.300.9 3.100 2.100 0-1.500-.5-2.600-1.600-3.200 1.200-.4 2.400-.2 3.600.6-.9-1.700-2.300-2.400-4.100-1.900C8.900 2.800 9.500 2 10.500 1.500 9 1.400 8 2.200 7.700 3.800z"/></svg>
<div class="tbb" style="top:483.4px;background:#22222e"></div>
<svg class="i" style="left:1321.1px;top:491.1px;color:#e2e2ea;fill:#e2e2ea" width="14" height="14" viewBox="0 0 16 16"><path d="M1.500 1.500h3.800v3.800H1.500zM6.100 1.500h3.800v3.800H6.100zM10.700 1.500h3.800v3.800h-3.800zM1.500 6.100h3.800v3.800H1.500zM6.100 6.100h3.800v3.800H6.100zM10.700 6.100h3.800v3.800h-3.800zM1.500 10.700h3.800v3.800H1.500zM6.100 10.700h3.800v3.800H6.100zM10.700 10.700h3.800v3.800h-3.800z"/></svg>
<div class="tbb" style="top:536.3px;background:#5a63f6"></div>
<svg class="i" style="left:1321.1px;top:544.0px;color:#dcdcf2;fill:#dcdcf2" width="14" height="14" viewBox="0 0 16 16"><circle cx="8" cy="8" r="5.400" fill="none" stroke="currentColor" stroke-width="2.600" stroke-dasharray="2.120 2.120"/><circle cx="8" cy="8" r="4.100"/><circle cx="8" cy="8" r="2.500" fill="#5a63f6"/><circle cx="8" cy="8" r="1.500"/></svg>
<div class="tbb" style="top:570.3px;background:#22222e"></div>
<svg class="i" style="left:1321.1px;top:578.0px;color:#e2e2ea;fill:#e2e2ea" width="14" height="14" viewBox="0 0 16 16"><path d="M4.300 8.300a3 3 0 0 1 .6-5.900c.9 0 1.700.4 2.300 1A3.300 3.300 0 0 1 12.400 5c-1-.3-2.100-.1-3 .5-.5-.4-1.200-.6-1.900-.6-1.800 0-3.200 1.400-3.200 3.400z" opacity=".8"/><path d="M5.800 13.800a2.700 2.700 0 0 1-.3-5.400 3 3 0 0 1 4.900-1.700 3.200 3.200 0 0 1 4.800 2.400 2.500 2.500 0 0 1-.6 4.700z"/></svg>
<div class="tbb" style="top:604.3px;background:#22222e"></div>
<svg class="i" style="left:1321.1px;top:612.0px;color:#e2e2ea;fill:#e2e2ea" width="14" height="14" viewBox="0 0 16 16"><path d="M1 4.200c1.200 0 1.200-.9 2.300-.9s1.200.9 2.400.9 1.200-.9 2.300-.9 1.200.9 2.300.9 1.200-.9 2.400-.9 1.100.9 2.300.9M1 8.200c1.200 0 1.200-.9 2.300-.9s1.200.9 2.400.9 1.200-.9 2.300-.9 1.200.9 2.300.9 1.200-.9 2.400-.9 1.100.9 2.300.9M1 12.200c1.200 0 1.200-.9 2.300-.9s1.200.9 2.400.9 1.200-.9 2.300-.9 1.200.9 2.300.9 1.200-.9 2.400-.9 1.100.9 2.300.9" fill="none" stroke="currentColor" stroke-width="1.300"/></svg>
<div class="tbb" style="top:656.6px;background:#5a63f6"></div>
<svg class="i" style="left:1321.1px;top:664.3px;color:#dcdcf2;fill:#dcdcf2" width="14" height="14" viewBox="0 0 16 16"><circle cx="5.800" cy="8" r="3.700" fill="none" stroke="currentColor" stroke-width="2.400" stroke-dasharray="1.940 1.940"/><circle cx="5.800" cy="8" r="2.700" fill="none" stroke="currentColor" stroke-width="1.700"/><circle cx="12.600" cy="3.800" r="1.900" fill="none" stroke="currentColor" stroke-width="1.500" stroke-dasharray="1.200 .790"/><circle cx="12.600" cy="3.800" r="1.100" fill="none" stroke="currentColor" stroke-width=".9"/><circle cx="12.600" cy="12.200" r="1.900" fill="none" stroke="currentColor" stroke-width="1.500" stroke-dasharray="1.200 .790"/><circle cx="12.600" cy="12.200" r="1.100" fill="none" stroke="currentColor" stroke-width=".9"/></svg>
<div class="tbb" style="top:690.6px;background:#5a63f6"></div>
<svg class="i" style="left:1321.1px;top:698.3px;color:#dcdcf2;fill:#dcdcf2" width="14" height="14" viewBox="0 0 16 16"><path d="M8 3.500C4.800 3.500 2.100 5.400 1 8c1.100 2.600 3.800 4.500 7 4.500s5.900-1.900 7-4.500c-1.100-2.600-3.800-4.500-7-4.500z" fill="none" stroke="currentColor" stroke-width="1.300"/><circle cx="8" cy="8" r="2.700"/><circle cx="9" cy="7" r="1" fill="#5a63f6"/></svg>
<div class="tbb" style="top:724.6px;background:#5a63f6"></div>
<svg class="i" style="left:1321.1px;top:732.3px;color:#dcdcf2;fill:#dcdcf2" width="14" height="14" viewBox="0 0 16 16"><path d="M1 2h14l-5.600 6.400V14l-2.800-1.600V8.400z"/></svg>
<div class="tbb" style="top:758.6px;background:#5a63f6"></div>
<svg class="i" style="left:1321.1px;top:766.3px;color:#dcdcf2;fill:#dcdcf2" width="14" height="14" viewBox="0 0 16 16"><path d="M8 1 .8 4.600 8 8.200l7.200-3.600zM2.900 6.900.8 8 8 11.600 15.200 8l-2.100-1.100L8 9.500zM2.900 10.300.8 11.400 8 15l7.200-3.600-2.100-1.100L8 12.900z"/></svg>
<div class="tbb" style="top:812.3px;background:#22222e"></div>
<svg class="i" style="left:1320.8px;top:819.8px;color:#e2e2ea;fill:#e2e2ea" width="14.5" height="14.5" viewBox="0 0 16 16"><path fill-rule="evenodd" d="M8 .8a7.200 7.200 0 1 0 0 14.400A7.200 7.200 0 0 0 8 .8zM8 6a2 2 0 1 1 0 4 2 2 0 0 1 0-4z"/></svg>
<div class="tbb" style="top:846.4px;background:#22222e"></div>
<svg class="i" style="left:1321.1px;top:854.1px;color:#e2e2ea;fill:#e2e2ea" width="14" height="14" viewBox="0 0 16 16"><path fill-rule="evenodd" d="M1 2.300h4.800l1.400 1.500H15v10H1zM4.200 5.300a1.100 1.100 0 1 0 0 2.200 1.100 1.100 0 0 0 0-2.200zM2.700 12h10.800L10 6.700 7.400 10.300 5.800 8.600z"/></svg>
<div class="tbb" style="top:880.4px;background:#22222e"></div>
<svg class="i" style="left:1321.1px;top:888.1px;color:#e2e2ea;fill:#e2e2ea" width="14" height="14" viewBox="0 0 16 16"><path d="M6.300 1h3.400v5.400h2.800L8 11.200 3.500 6.400h2.800zM1.800 12.800h12.400V15H1.800z"/></svg>
<div class="tbb" style="top:914.4px;background:#22222e"></div>
<svg class="i" style="left:1321.1px;top:922.1px;color:#e2e2ea;fill:#e2e2ea" width="14" height="14" viewBox="0 0 16 16"><path d="M1.500 9.500h2.300v5H1.500zM5.300 11h2.300v3.500H5.300zM9.100 9.800h2.300v4.700H9.100zM12.900 7.200h2.300v7.300h-2.300z"/><path d="M1.300 7.200 6 2.800l3.300 3.700 4.800-4.200" fill="none" stroke="currentColor" stroke-width="1.300"/></svg>
<div class="panel"></div>
<svg class="i" style="left:1352px;top:25px" width="44" height="44" viewBox="1352 25 44 44"><circle cx="1373.300" cy="47.300" r="12.600" fill="#fff"/><line x1="1356" y1="64.600" x2="1391" y2="30" stroke="#22222e" stroke-width="3.200"/><line x1="1357" y1="63.700" x2="1390" y2="31" stroke="#fff" stroke-width="1.300"/></svg>
<div class="cb" style="left:1514.0px;top:29.800px"></div>
<svg class="i" style="left:1521.2px;top:37.0px;color:#bec0d6;fill:#bec0d6" width="20.5" height="20.5" viewBox="0 0 16 16"><path d="M8 1.300.3 8.200l1 1.100L2.500 8.300V14.500h4v-4h3v4h4V8.300l1.200 1 1-1.100-2.700-2.400V2.200h-2v1.800z"/></svg>
<div class="cb" style="left:1557.0px;top:29.800px"></div>
<svg class="i" style="left:1564.3px;top:37.0px;color:#bec0d6;fill:#bec0d6" width="20.5" height="20.5" viewBox="0 0 16 16"><path d="M4.200 1.600h4.900L12.800 5.300v8.100a1 1 0 0 1-1 1H4.200a1 1 0 0 1-1-1V2.600a1 1 0 0 1 1-1z" fill="none" stroke="currentColor" stroke-width="1.700" stroke-linejoin="round"/><path d="M9 1.800v3.600h3.600z"/></svg>
<div class="cb" style="left:1600.1px;top:29.800px"></div>
<svg class="i" style="left:1607.3px;top:37.0px;color:#bec0d6;fill:#bec0d6" width="20.5" height="20.5" viewBox="0 0 16 16"><path d="M.8 3.400A1.400 1.400 0 0 1 2.200 2h3.600l1.500 1.600h5A1.400 1.400 0 0 1 13.700 5v1H4.400a2 2 0 0 0-1.900 1.300L.8 11.800zM4.500 7h10.300c.7 0 1.100.7.900 1.300l-1.500 4.600a1.500 1.500 0 0 1-1.400 1H1.300l2-5.900A1.300 1.300 0 0 1 4.500 7z"/></svg>
<div class="cb" style="left:1643.1px;top:29.800px"></div>
<svg class="i" style="left:1650.4px;top:37.0px;color:#bec0d6;fill:#bec0d6" width="20.5" height="20.5" viewBox="0 0 16 16"><path fill-rule="evenodd" d="M1.800 3.300A1.500 1.500 0 0 1 3.300 1.800h8.200l2.700 2.700v8.200a1.500 1.500 0 0 1-1.500 1.500H3.300a1.500 1.500 0 0 1-1.500-1.500zM4 3.600v2.800h6.600V3.600zM8 8.700a1.900 1.900 0 1 0 0 3.800 1.900 1.900 0 0 0 0-3.800z"/></svg>
<div class="cb" style="left:1686.2px;top:29.800px"></div>
<svg class="i" style="left:1693.4px;top:37.0px;color:#bec0d6;fill:#bec0d6" width="20.5" height="20.5" viewBox="0 0 16 16"><path fill-rule="evenodd" d="M.8 2.800A1.400 1.400 0 0 1 2.200 1.400h7.300L12 3.900v3.300a4.800 4.800 0 0 0-4.300 5.400H2.200A1.400 1.400 0 0 1 .8 11.200zM2.800 3v2.500h6V3zM6.400 7.500a1.700 1.700 0 1 0 0 3.400 1.700 1.700 0 0 0 0-3.400z"/><path fill-rule="evenodd" d="M12.300 8.200a3.700 3.700 0 1 0 0 7.400 3.700 3.700 0 0 0 0-7.400zM12.300 9.700l2.300 2.200-2.300 2.200v-1.500h-2.200v-1.400h2.200z"/></svg>
<div class="cb" style="left:1729.2px;top:29.800px"></div>
<svg class="i" style="left:1736.5px;top:37.0px;color:#bec0d6;fill:#bec0d6" width="20.5" height="20.5" viewBox="0 0 16 16"><path fill-rule="evenodd" d="M.8 2.800A1.400 1.400 0 0 1 2.200 1.400h7.300L12 3.900v3.600l-5 5-.1.100H2.200A1.400 1.400 0 0 1 .8 11.200zM2.800 3v2.500h6V3zM6.400 7.500a1.700 1.700 0 1 0 0 3.400 1.700 1.700 0 0 0 0-3.400z"/><path d="M13.300 6.800l1.900 1.900 .7-.7c.3-.3.3-.8 0-1.100l-.8-.8c-.3-.3-.8-.3-1.100 0zM12.600 7.500l1.900 1.900-5 5-2.400.5.500-2.400z"/></svg>
<div class="cb" style="left:1772.2px;top:29.800px"></div>
<svg class="i" style="left:1778.7px;top:36.3px;color:#bec0d6;fill:#bec0d6" width="22" height="22" viewBox="0 0 16 16"><path d="M3.300 7V5a1.700 1.700 0 0 1 1.700-1.700h2.300M12.700 9v2a1.700 1.700 0 0 1-1.700 1.700H8.700M9 3.300h2a1.700 1.700 0 0 1 1.700 1.700v1M7 12.700H5a1.700 1.700 0 0 1-1.700-1.700v-1" fill="none" stroke="currentColor" stroke-width="2.300"/><path d="M6.600.3 10.200 3.300 6.600 6.300zM9.400 15.700 5.800 12.700l3.600-3zM15.700 5l-3 3.500-3-3.500zM.3 11l3-3.500 3 3.500z"/></svg>
<div class="cb" style="left:1815.3px;top:29.800px"></div>
<svg class="i" style="left:1822.5px;top:37.0px;color:#bec0d6;fill:#bec0d6" width="20.5" height="20.5" viewBox="0 0 16 16"><path fill-rule="evenodd" d="M.8 5.200a1.300 1.300 0 0 1 1.300-1.300h2.300l.9-1.500h5.400l.9 1.500h2.300a1.300 1.300 0 0 1 1.300 1.300v7.300a1.300 1.300 0 0 1-1.300 1.300H2.100A1.300 1.300 0 0 1 .8 12.500zM8 5.800a3 3 0 1 0 0 6 3 3 0 0 0 0-6zM2.300 2.700h1.900v.8H2.300z"/></svg>
<div class="cb" style="left:1858.3px;top:29.800px"></div>
<svg class="i" style="left:1865.6px;top:37.0px;color:#bec0d6;fill:#bec0d6" width="20.5" height="20.5" viewBox="0 0 16 16"><path d="M6.300.8C3.200.8.7 2.900.7 5.500c0 1.100.5 2.200 1.300 3l-.9 2.400 2.900-1c.7.200 1.500.4 2.300.4 3.100 0 5.600-2.100 5.600-4.700S9.400.8 6.300.8z"/><path d="M12.900 6.500c0 2.900-2.700 5-6 5.200.9 1.500 2.800 2.400 4.900 2.100l2.800 1.200-.7-2.300c.9-.8 1.400-1.800 1.400-2.900 0-1.400-1-2.600-2.400-3.300z" opacity=".85"/><path d="M5 4.200c.1-1 .8-1.500 1.700-1.500.9 0 1.600.5 1.600 1.400 0 1.200-1.400 1.100-1.400 2.300h-.9c0-1.500 1.300-1.500 1.300-2.300 0-.4-.3-.6-.7-.6s-.7.300-.7.700zM6 7h1v1H6z" fill="#3a3a48"/></svg>
<div class="ip" style="left:1356.500px;width:264.500px"></div><div class="ip" style="left:1628px;width:265.200px"></div>
<div class="dd" style="left:1351.4px;top:916.5px"></div>
<div class="dd" style="left:1351.4px;top:922.8px"></div>
<div class="dd" style="left:1351.4px;top:929px"></div>
<div class="dd" style="left:1623.3px;top:916.5px"></div>
<div class="dd" style="left:1623.3px;top:922.8px"></div>
<div class="dd" style="left:1623.3px;top:929px"></div>
<div class="bbar"></div>
<div class="sbox"></div>
<svg class="i" style="left:1373.3px;top:91.5px;color:#e8e8f0;fill:#e8e8f0" width="8.5" height="8.5" viewBox="0 0 16 16"><circle cx="6.500" cy="6.500" r="4.200" fill="none" stroke="currentColor" stroke-width="2.200"/><path d="M9.600 9.600 14 14" stroke="currentColor" stroke-width="2.600" stroke-linecap="round"/></svg>
<span class="t" style="left:1391.500px;top:86.300px;font-size:10px;letter-spacing:0;color:#5c5c68">Search</span>
<div class="gc" style="left:1572.7px;top:87.700px"></div>
<svg class="i" style="left:1575.5px;top:91.0px;color:#3a3a42;fill:#3a3a42" width="10.5" height="10.5" viewBox="0 0 16 16"><polyline points="2.500,5.200 8,10.800 13.500,5.200" fill="none" stroke="currentColor" stroke-width="1.300"/></svg>
<div class="gc" style="left:1594.8px;top:87.700px"></div>
<svg class="i" style="left:1597.7px;top:90.5px;color:#3a3a42;fill:#3a3a42" width="10.5" height="10.5" viewBox="0 0 16 16"><polyline points="5.200,2.500 10.800,8 5.200,13.500" fill="none" stroke="currentColor" stroke-width="1.300"/></svg>
<div class="sep" style="top:112px"></div>
<div class="sep" style="top:132px"></div>
<div class="sep" style="top:152px"></div>
<div class="sep" style="top:172px"></div>
<div class="sep" style="top:192px"></div>
<div class="sep" style="top:212px"></div>
<div class="sep" style="top:232px"></div>
<div class="sep" style="top:252px"></div>
<div class="sep" style="top:272px"></div>
<div class="sep" style="top:292px"></div>
<div class="sep" style="top:312px"></div>
<div class="sep" style="top:332px"></div>
<div class="sep" style="top:352px"></div>
<div class="sep" style="top:372px"></div>
<div class="sep" style="top:392px"></div>
<div class="sep" style="top:412px"></div>
<div class="hl"></div>
<svg class="i" style="left:1370.5px;top:117.8px;color:#9a9aa6;fill:#9a9aa6" width="11" height="11" viewBox="0 0 16 16"><polyline points="2.500,5.200 8,10.800 13.500,5.200" fill="none" stroke="currentColor" stroke-width="1.300"/></svg>
<svg class="i" style="left:1386.7px;top:115.5px;color:#9c9ca6;fill:#9c9ca6" width="14" height="14" viewBox="0 0 16 16"><path d="M0.500 12.500 6 4.500l2.200 3.200L9.800 5.500l5.700 7z"/><path d="M6 4.500 3.800 7.700l1.400-.5 1 .9 1-.9 1 .5z" fill="#fff" opacity=".35"/></svg>
<span class="t " style="left:1405.4px;top:114px;">Terrain</span>
<svg class="i" style="left:1368.8px;top:135.8px;color:#a9a9b0;fill:#a9a9b0" width="14.5" height="14.5" viewBox="0 0 16 16"><path fill-rule="evenodd" d="M8 3.2C4.6 3.2 1.800 5.200.6 8c1.200 2.800 4 4.800 7.400 4.800s6.200-2 7.400-4.800C14.200 5.200 11.400 3.200 8 3.200zm0 8A3.200 3.200 0 1 1 8 4.800a3.200 3.200 0 0 1 0 6.400zM8 6.200a1.800 1.800 0 1 0 0 3.600 1.800 1.800 0 0 0 0-3.600z"/></svg>
<svg class="i" style="left:1390.4px;top:137.8px;color:#9a9aa6;fill:#9a9aa6" width="11" height="11" viewBox="0 0 16 16"><polyline points="2.500,5.200 8,10.800 13.500,5.200" fill="none" stroke="currentColor" stroke-width="1.300"/></svg>
<svg class="i" style="left:1406.3px;top:136.5px;color:#9c9ca6;fill:#9c9ca6" width="13" height="13" viewBox="0 0 16 16"><path d="M1 13.500c1.500-2.300 4-3.400 7-3.400s5.500 1.100 7 3.400z"/><path d="M7.400 10.500c.3-2 .3-3.800-.2-5.600l1.100-.2c.6 2 .6 3.900.3 5.800z"/><path d="M7.700 5.200C6.400 3.600 4.700 3.300 3 4.200c1.400 0 2.600.5 3.600 1.500C5.200 5.600 4.100 6.300 3.500 7.700c1.200-1 2.700-1.500 4.200-1.400 1.300.2 2.300.9 3.100 2.100 0-1.500-.5-2.600-1.600-3.200 1.200-.4 2.400-.2 3.600.6-.9-1.700-2.300-2.400-4.100-1.900C8.900 2.800 9.500 2 10.500 1.500 9 1.400 8 2.200 7.700 3.800z"/></svg>
<span class="t " style="left:1423.3px;top:134px;">Biomes</span>
<svg class="i" style="left:1577.5px;top:136.8px;color:#75757f;fill:#75757f" width="12.5" height="12.5" viewBox="0 0 16 16"><path d="M.8 3.400A1.400 1.400 0 0 1 2.200 2h3.600l1.500 1.600h5A1.400 1.400 0 0 1 13.700 5v1H4.400a2 2 0 0 0-1.900 1.300L.8 11.800zM4.500 7h10.300c.7 0 1.100.7.900 1.300l-1.500 4.600a1.500 1.500 0 0 1-1.400 1H1.300l2-5.900A1.300 1.300 0 0 1 4.500 7z"/></svg><svg class="i" style="left:1595.8px;top:136.9px;color:#8a8a92;fill:#8a8a92" width="12.2" height="12.2" viewBox="0 0 16 16"><circle cx="8" cy="8" r="7.600"/><path d="M7 3.800h2V7h3.200v2H9v3.200H7V9H3.800V7H7z" fill="#2a2a38"/></svg>
<svg class="i" style="left:1368.8px;top:155.8px;color:#a9a9b0;fill:#a9a9b0" width="14.5" height="14.5" viewBox="0 0 16 16"><path fill-rule="evenodd" d="M8 3.2C4.6 3.2 1.800 5.200.6 8c1.200 2.800 4 4.800 7.400 4.800s6.200-2 7.400-4.800C14.200 5.200 11.400 3.200 8 3.200zm0 8A3.200 3.200 0 1 1 8 4.800a3.200 3.200 0 0 1 0 6.400zM8 6.200a1.800 1.800 0 1 0 0 3.600 1.800 1.800 0 0 0 0-3.600z"/></svg>
<svg class="i" style="left:1408.1px;top:157.8px;color:#9a9aa6;fill:#9a9aa6" width="11" height="11" viewBox="0 0 16 16"><polyline points="2.500,5.200 8,10.800 13.500,5.200" fill="none" stroke="currentColor" stroke-width="1.300"/></svg>
<div class="pill"></div>
<svg class="i" style="left:1440.5px;top:156.0px;color:#9c9ca6;fill:#9c9ca6" width="13" height="13" viewBox="0 0 16 16"><path d="M1 13.500c1.500-2.300 4-3.400 7-3.400s5.500 1.100 7 3.400z"/><path d="M7.400 10.500c.3-2 .3-3.800-.2-5.600l1.100-.2c.6 2 .6 3.900.3 5.800z"/><path d="M7.700 5.200C6.400 3.600 4.700 3.300 3 4.200c1.400 0 2.600.5 3.600 1.500C5.200 5.600 4.100 6.300 3.500 7.700c1.200-1 2.700-1.500 4.200-1.400 1.300.2 2.300.9 3.100 2.100 0-1.500-.5-2.600-1.600-3.200 1.200-.4 2.400-.2 3.600.6-.9-1.700-2.300-2.400-4.100-1.900C8.900 2.800 9.500 2 10.500 1.500 9 1.400 8 2.200 7.700 3.800z"/></svg>
<span class="t " style="left:1457px;top:154px;">Global</span>
<svg class="i" style="left:1595.8px;top:156.2px;color:#75757f;fill:#75757f" width="12.5" height="12.5" viewBox="0 0 16 16"><path d="M7.500 3.500.8 6.800l6.700 3.300 6.700-3.300zM2.800 9 .8 10l6.700 3.300L14.200 10l-2-1-4.700 2.300zM2.800 11.800l-2 1 6.700 3.300 6.700-3.300-2-1-4.700 2.300z"/><path d="M12.800 0l.7 1.800 1.800.7-1.800.7-.7 1.800-.7-1.800-1.800-.7 1.800-.7z"/></svg>
<svg class="i" style="left:1368.8px;top:175.8px;color:#a9a9b0;fill:#a9a9b0" width="14.5" height="14.5" viewBox="0 0 16 16"><path fill-rule="evenodd" d="M8 3.2C4.6 3.2 1.800 5.200.6 8c1.200 2.800 4 4.800 7.400 4.800s6.200-2 7.400-4.800C14.200 5.200 11.400 3.200 8 3.200zm0 8A3.200 3.200 0 1 1 8 4.800a3.200 3.200 0 0 1 0 6.400zM8 6.200a1.800 1.800 0 1 0 0 3.600 1.800 1.800 0 0 0 0-3.600z"/></svg>
<svg class="i" style="left:1426.5px;top:177.8px;color:#9a9aa6;fill:#9a9aa6" width="11" height="11" viewBox="0 0 16 16"><polyline points="2.500,5.200 8,10.800 13.500,5.200" fill="none" stroke="currentColor" stroke-width="1.300"/></svg>
<svg class="i" style="left:1442.8px;top:176.8px;color:#b4b4bc;fill:#b4b4bc" width="12.5" height="12.5" viewBox="0 0 16 16"><path d="M1 2h14l-5.600 6.400V14l-2.800-1.600V8.400z"/></svg>
<span class="t " style="left:1459.8px;top:174px;">Filters</span>
<svg class="i" style="left:1577.5px;top:176.8px;color:#75757f;fill:#75757f" width="12.5" height="12.5" viewBox="0 0 16 16"><path d="M.8 3.400A1.400 1.400 0 0 1 2.200 2h3.600l1.500 1.600h5A1.400 1.400 0 0 1 13.700 5v1H4.400a2 2 0 0 0-1.900 1.300L.8 11.800zM4.500 7h10.300c.7 0 1.100.7.900 1.300l-1.500 4.600a1.500 1.500 0 0 1-1.400 1H1.300l2-5.900A1.300 1.300 0 0 1 4.500 7z"/></svg><svg class="i" style="left:1595.8px;top:176.9px;color:#8a8a92;fill:#8a8a92" width="12.2" height="12.2" viewBox="0 0 16 16"><circle cx="8" cy="8" r="7.600"/><path d="M7 3.800h2V7h3.200v2H9v3.200H7V9H3.800V7H7z" fill="#2a2a38"/></svg>
<svg class="i" style="left:1368.8px;top:195.8px;color:#a9a9b0;fill:#a9a9b0" width="14.5" height="14.5" viewBox="0 0 16 16"><path fill-rule="evenodd" d="M8 3.2C4.6 3.2 1.800 5.200.6 8c1.200 2.800 4 4.800 7.400 4.800s6.200-2 7.400-4.800C14.200 5.200 11.400 3.200 8 3.200zm0 8A3.200 3.200 0 1 1 8 4.800a3.200 3.200 0 0 1 0 6.400zM8 6.200a1.800 1.800 0 1 0 0 3.600 1.800 1.800 0 0 0 0-3.600z"/></svg>
<svg class="i" style="left:1444.1px;top:197.5px;color:#9a9aa6;fill:#9a9aa6" width="11" height="11" viewBox="0 0 16 16"><polyline points="5.200,2.500 10.800,8 5.200,13.500" fill="none" stroke="currentColor" stroke-width="1.300"/></svg>
<svg class="i" style="left:1460.5px;top:196.4px;color:#b4b4bc;fill:#b4b4bc" width="12.5" height="12.5" viewBox="0 0 16 16"><path d="M1 2h14l-5.600 6.400V14l-2.800-1.600V8.400z"/></svg>
<span class="t " style="left:1477.5px;top:194px;color:#b9b9c6">Effect - Ridged</span>
<svg class="i" style="left:1596.0px;top:197.0px;color:#64647a;fill:#64647a" width="12" height="12" viewBox="0 0 16 16"><path d="M13.300 6.300A5.600 5.600 0 0 0 3.200 4.900M2.700 9.700a5.600 5.600 0 0 0 10.100 1.400" fill="none" stroke="currentColor" stroke-width="1.700"/><path d="M14.500 1.800v5h-5zM1.500 14.200v-5h5z"/></svg>
<svg class="i" style="left:1368.8px;top:215.8px;color:#a9a9b0;fill:#a9a9b0" width="14.5" height="14.5" viewBox="0 0 16 16"><path fill-rule="evenodd" d="M8 3.2C4.6 3.2 1.800 5.200.6 8c1.200 2.800 4 4.800 7.400 4.800s6.200-2 7.400-4.800C14.200 5.200 11.400 3.200 8 3.200zm0 8A3.200 3.200 0 1 1 8 4.800a3.200 3.200 0 0 1 0 6.400zM8 6.200a1.800 1.800 0 1 0 0 3.600 1.800 1.800 0 0 0 0-3.600z"/></svg>
<svg class="i" style="left:1426.5px;top:217.8px;color:#9a9aa6;fill:#9a9aa6" width="11" height="11" viewBox="0 0 16 16"><polyline points="2.500,5.200 8,10.800 13.500,5.200" fill="none" stroke="currentColor" stroke-width="1.300"/></svg>
<svg class="i" style="left:1442.8px;top:216.8px;color:#9c9ca6;fill:#9c9ca6" width="12.5" height="12.5" viewBox="0 0 16 16"><defs><clipPath id="cmat"><circle cx="8" cy="8" r="6.800"/></clipPath></defs><g clip-path="url(#cmat)"><path d="M0 1.500h16v1.900H0zM0 4.800h16v1.900H0zM0 8.100h16V10H0zM0 11.400h16v1.900H0zM0 14.200h16V16H0z"/><path d="M4.200 0h1.300v16H4.200zM10.500 0h1.300v16h-1.300z" opacity=".55"/></g></svg>
<span class="t " style="left:1459.8px;top:214px;">Materials</span>
<svg class="i" style="left:1577.5px;top:216.8px;color:#75757f;fill:#75757f" width="12.5" height="12.5" viewBox="0 0 16 16"><path d="M.8 3.400A1.400 1.400 0 0 1 2.200 2h3.600l1.500 1.600h5A1.400 1.400 0 0 1 13.700 5v1H4.400a2 2 0 0 0-1.900 1.300L.8 11.800zM4.500 7h10.300c.7 0 1.100.7.900 1.300l-1.500 4.600a1.500 1.500 0 0 1-1.400 1H1.300l2-5.900A1.300 1.300 0 0 1 4.500 7z"/></svg><svg class="i" style="left:1595.8px;top:216.9px;color:#8a8a92;fill:#8a8a92" width="12.2" height="12.2" viewBox="0 0 16 16"><circle cx="8" cy="8" r="7.600"/><path d="M7 3.800h2V7h3.200v2H9v3.200H7V9H3.800V7H7z" fill="#2a2a38"/></svg>
<svg class="i" style="left:1368.8px;top:235.8px;color:#a9a9b0;fill:#a9a9b0" width="14.5" height="14.5" viewBox="0 0 16 16"><path fill-rule="evenodd" d="M8 3.2C4.6 3.2 1.800 5.200.6 8c1.200 2.800 4 4.800 7.400 4.800s6.200-2 7.400-4.800C14.200 5.200 11.400 3.200 8 3.200zm0 8A3.200 3.200 0 1 1 8 4.800a3.200 3.200 0 0 1 0 6.400zM8 6.200a1.800 1.800 0 1 0 0 3.600 1.800 1.800 0 0 0 0-3.600z"/></svg>
<svg class="i" style="left:1444.1px;top:237.5px;color:#9a9aa6;fill:#9a9aa6" width="11" height="11" viewBox="0 0 16 16"><polyline points="5.200,2.500 10.800,8 5.200,13.500" fill="none" stroke="currentColor" stroke-width="1.300"/></svg>
<svg class="i" style="left:1460.5px;top:236.8px;color:#9c9ca6;fill:#9c9ca6" width="12.5" height="12.5" viewBox="0 0 16 16"><defs><clipPath id="cmat"><circle cx="8" cy="8" r="6.800"/></clipPath></defs><g clip-path="url(#cmat)"><path d="M0 1.500h16v1.900H0zM0 4.800h16v1.900H0zM0 8.100h16V10H0zM0 11.400h16v1.900H0zM0 14.200h16V16H0z"/><path d="M4.200 0h1.300v16H4.200zM10.500 0h1.300v16h-1.300z" opacity=".55"/></g></svg>
<span class="t " style="left:1477.5px;top:234px;">Color</span>
<div class="wbox"></div>
<svg class="i" style="left:1596.0px;top:237.0px;color:#64646e;fill:#64646e" width="12" height="12" viewBox="0 0 16 16"><path d="M13.300 6.300A5.600 5.600 0 0 0 3.200 4.900M2.700 9.700a5.600 5.600 0 0 0 10.100 1.400" fill="none" stroke="currentColor" stroke-width="1.700"/><path d="M14.500 1.800v5h-5zM1.500 14.200v-5h5z"/></svg>
<svg class="i" style="left:1368.8px;top:255.8px;color:#a9a9b0;fill:#a9a9b0" width="14.5" height="14.5" viewBox="0 0 16 16"><path fill-rule="evenodd" d="M8 3.2C4.6 3.2 1.800 5.200.6 8c1.200 2.800 4 4.800 7.400 4.800s6.200-2 7.400-4.800C14.200 5.200 11.400 3.200 8 3.200zm0 8A3.200 3.200 0 1 1 8 4.800a3.200 3.200 0 0 1 0 6.400zM8 6.200a1.800 1.800 0 1 0 0 3.600 1.800 1.800 0 0 0 0-3.600z"/></svg>
<svg class="i" style="left:1406.5px;top:256.8px;color:#b4b4bc;fill:#b4b4bc" width="12.5" height="12.5" viewBox="0 0 16 16"><path d="M8 1 .8 4.600 8 8.200l7.200-3.600zM2.900 6.900.8 8 8 11.600 15.200 8l-2.100-1.100L8 9.500zM2.900 10.300.8 11.400 8 15l7.200-3.600-2.100-1.100L8 12.900z"/></svg>
<span class="t " style="left:1423.3px;top:254px;">Biome Layers</span>
<svg class="i" style="left:1577.5px;top:256.8px;color:#75757f;fill:#75757f" width="12.5" height="12.5" viewBox="0 0 16 16"><path d="M.8 3.400A1.400 1.400 0 0 1 2.200 2h3.600l1.500 1.600h5A1.400 1.400 0 0 1 13.700 5v1H4.400a2 2 0 0 0-1.900 1.300L.8 11.800zM4.500 7h10.300c.7 0 1.100.7.900 1.300l-1.500 4.600a1.500 1.500 0 0 1-1.400 1H1.300l2-5.900A1.300 1.300 0 0 1 4.500 7z"/></svg><svg class="i" style="left:1595.8px;top:256.9px;color:#8a8a92;fill:#8a8a92" width="12.2" height="12.2" viewBox="0 0 16 16"><circle cx="8" cy="8" r="7.600"/><path d="M7 3.800h2V7h3.200v2H9v3.200H7V9H3.800V7H7z" fill="#2a2a38"/></svg>
<svg class="i" style="left:1368.8px;top:275.8px;color:#a9a9b0;fill:#a9a9b0" width="14.5" height="14.5" viewBox="0 0 16 16"><path fill-rule="evenodd" d="M8 3.2C4.6 3.2 1.800 5.200.6 8c1.200 2.800 4 4.800 7.400 4.800s6.200-2 7.400-4.800C14.200 5.200 11.400 3.200 8 3.200zm0 8A3.200 3.200 0 1 1 8 4.800a3.200 3.200 0 0 1 0 6.400zM8 6.200a1.800 1.800 0 1 0 0 3.600 1.800 1.800 0 0 0 0-3.600z"/></svg>
<svg class="i" style="left:1406.3px;top:276.0px;color:#b4b4bc;fill:#b4b4bc" width="13" height="13" viewBox="0 0 16 16"><path d="M0.500 13 5.500 4l2.600 4.600L10 6l5.500 7z"/></svg>
<span class="t " style="left:1423.3px;top:274px;">Shape Layers</span>
<svg class="i" style="left:1577.5px;top:276.8px;color:#75757f;fill:#75757f" width="12.5" height="12.5" viewBox="0 0 16 16"><path d="M.8 3.400A1.400 1.400 0 0 1 2.200 2h3.600l1.500 1.600h5A1.400 1.400 0 0 1 13.700 5v1H4.400a2 2 0 0 0-1.900 1.300L.8 11.800zM4.500 7h10.300c.7 0 1.100.7.900 1.300l-1.500 4.600a1.500 1.500 0 0 1-1.400 1H1.300l2-5.900A1.300 1.300 0 0 1 4.500 7z"/></svg><svg class="i" style="left:1595.8px;top:276.9px;color:#8a8a92;fill:#8a8a92" width="12.2" height="12.2" viewBox="0 0 16 16"><circle cx="8" cy="8" r="7.600"/><path d="M7 3.800h2V7h3.200v2H9v3.200H7V9H3.800V7H7z" fill="#2a2a38"/></svg>
<svg class="i" style="left:1368.8px;top:295.8px;color:#a9a9b0;fill:#a9a9b0" width="14.5" height="14.5" viewBox="0 0 16 16"><path fill-rule="evenodd" d="M8 3.2C4.6 3.2 1.800 5.200.6 8c1.200 2.800 4 4.800 7.400 4.800s6.200-2 7.400-4.800C14.200 5.200 11.400 3.200 8 3.200zm0 8A3.200 3.200 0 1 1 8 4.800a3.200 3.200 0 0 1 0 6.400zM8 6.200a1.800 1.800 0 1 0 0 3.600 1.800 1.800 0 0 0 0-3.600z"/></svg>
<svg class="i" style="left:1406.5px;top:296.8px;color:#b4b4bc;fill:#b4b4bc" width="12.5" height="12.5" viewBox="0 0 16 16"><path d="M14.600 1.400c-.6-.6-1.600-.6-2.200 0L6.600 7.200l2.200 2.200 5.800-5.800c.6-.6.6-1.600 0-2.200zM5.700 8.200C4.200 8.200 3 9.400 3 10.900c0 1.100-.8 1.900-1.900 2.100.9 1 2.200 1.600 3.600 1.600 2.300 0 3.600-1.700 3.600-3.700z"/></svg>
<span class="t " style="left:1423.3px;top:294px;">Mask Layers</span>
<svg class="i" style="left:1577.5px;top:296.8px;color:#75757f;fill:#75757f" width="12.5" height="12.5" viewBox="0 0 16 16"><path d="M.8 3.400A1.400 1.400 0 0 1 2.200 2h3.600l1.500 1.600h5A1.400 1.400 0 0 1 13.700 5v1H4.400a2 2 0 0 0-1.900 1.300L.8 11.800zM4.500 7h10.300c.7 0 1.100.7.900 1.300l-1.500 4.600a1.500 1.500 0 0 1-1.400 1H1.300l2-5.900A1.300 1.300 0 0 1 4.500 7z"/></svg><svg class="i" style="left:1595.8px;top:296.9px;color:#8a8a92;fill:#8a8a92" width="12.2" height="12.2" viewBox="0 0 16 16"><circle cx="8" cy="8" r="7.600"/><path d="M7 3.800h2V7h3.200v2H9v3.200H7V9H3.800V7H7z" fill="#2a2a38"/></svg>
<svg class="i" style="left:1368.8px;top:315.8px;color:#a9a9b0;fill:#a9a9b0" width="14.5" height="14.5" viewBox="0 0 16 16"><path fill-rule="evenodd" d="M8 3.2C4.6 3.2 1.800 5.200.6 8c1.200 2.800 4 4.800 7.400 4.800s6.200-2 7.400-4.800C14.200 5.200 11.400 3.200 8 3.200zm0 8A3.200 3.200 0 1 1 8 4.800a3.200 3.200 0 0 1 0 6.400zM8 6.200a1.800 1.800 0 1 0 0 3.600 1.800 1.800 0 0 0 0-3.600z"/></svg>
<svg class="i" style="left:1407.0px;top:317.2px;color:#b4b4bc;fill:#b4b4bc" width="11.5" height="11.5" viewBox="0 0 16 16"><circle cx="8" cy="3" r="1.900"/><circle cx="5" cy="8" r="1.900"/><circle cx="11" cy="8" r="1.900"/><circle cx="2.500" cy="13" r="1.900"/><circle cx="8" cy="13" r="1.900"/><circle cx="13.500" cy="13" r="1.900"/></svg>
<span class="t " style="left:1423.3px;top:314px;">Simulation Layers</span>
<svg class="i" style="left:1577.5px;top:316.8px;color:#75757f;fill:#75757f" width="12.5" height="12.5" viewBox="0 0 16 16"><path d="M.8 3.400A1.400 1.400 0 0 1 2.200 2h3.600l1.500 1.600h5A1.400 1.400 0 0 1 13.700 5v1H4.400a2 2 0 0 0-1.900 1.300L.8 11.800zM4.500 7h10.300c.7 0 1.100.7.900 1.300l-1.500 4.600a1.500 1.500 0 0 1-1.400 1H1.300l2-5.900A1.300 1.300 0 0 1 4.500 7z"/></svg><svg class="i" style="left:1595.8px;top:316.9px;color:#8a8a92;fill:#8a8a92" width="12.2" height="12.2" viewBox="0 0 16 16"><circle cx="8" cy="8" r="7.600"/><path d="M7 3.800h2V7h3.200v2H9v3.200H7V9H3.800V7H7z" fill="#2a2a38"/></svg>
<svg class="i" style="left:1369.9px;top:337.5px;color:#9a9aa6;fill:#9a9aa6" width="11" height="11" viewBox="0 0 16 16"><polyline points="5.200,2.500 10.800,8 5.200,13.500" fill="none" stroke="currentColor" stroke-width="1.300"/></svg>
<svg class="i" style="left:1387.0px;top:336.2px;color:#b4b4bc;fill:#b4b4bc" width="13.5" height="13.5" viewBox="0 0 16 16"><path d="M.5 4.300A1.600 1.600 0 0 1 2.100 2.700h7.300A1.600 1.600 0 0 1 11 4.300v7.400a1.600 1.600 0 0 1-1.600 1.600H2.100A1.600 1.600 0 0 1 .5 11.700zM12 6.300l3.500-2.300v8l-3.500-2.300z"/></svg>
<span class="t " style="left:1405px;top:334px;">Scene</span>
<svg class="i" style="left:1387.5px;top:356.8px;color:#b4b4bc;fill:#b4b4bc" width="12.5" height="12.5" viewBox="0 0 16 16"><path d="M6.300 1h3.400v5.400h2.800L8 11.200 3.500 6.400h2.800zM1.800 12.800h12.400V15H1.800z"/></svg>
<span class="t " style="left:1405px;top:354px;">Export</span>
<svg class="i" style="left:1595.8px;top:356.9px;color:#8a8a92;fill:#8a8a92" width="12.2" height="12.2" viewBox="0 0 16 16"><circle cx="8" cy="8" r="7.600"/><path d="M7 3.800h2V7h3.200v2H9v3.200H7V9H3.800V7H7z" fill="#2a2a38"/></svg>
<svg class="i" style="left:1369.9px;top:377.5px;color:#9a9aa6;fill:#9a9aa6" width="11" height="11" viewBox="0 0 16 16"><polyline points="5.200,2.500 10.800,8 5.200,13.500" fill="none" stroke="currentColor" stroke-width="1.300"/></svg>
<svg class="i" style="left:1387.3px;top:376.0px;color:#b4b4bc;fill:#b4b4bc" width="13" height="13" viewBox="0 0 16 16"><path d="M8 .8l2.200 4.700 5.100.6-3.800 3.500 1 5.100L8 12.200 3.500 14.700l1-5.100L.7 6.100l5.100-.6z"/></svg>
<span class="t " style="left:1405px;top:374px;">Presets</span>
<svg class="i" style="left:1369.9px;top:397.5px;color:#9a9aa6;fill:#9a9aa6" width="11" height="11" viewBox="0 0 16 16"><polyline points="5.200,2.500 10.800,8 5.200,13.500" fill="none" stroke="currentColor" stroke-width="1.300"/></svg>
<svg class="i" style="left:1387.3px;top:396.5px;color:#8c8c96;fill:#8c8c96" width="13" height="13" viewBox="0 0 16 16"><circle cx="8" cy="8" r="6.200" fill="none" stroke="currentColor" stroke-width="1.800" stroke-dasharray="2.430 2.430"/><circle cx="8" cy="8" r="4.900" fill="none" stroke="currentColor" stroke-width="1.100"/><circle cx="8" cy="8" r="2" fill="none" stroke="currentColor" stroke-width="1.100"/></svg>
<span class="t " style="left:1405px;top:394px;">Options</span>
<svg class="i" style="left:1638.2px;top:88.8px;color:#d0d0d6;fill:#d0d0d6" width="13.5" height="13.5" viewBox="0 0 16 16"><path d="M1 2h14l-5.600 6.400V14l-2.800-1.600V8.400z"/></svg>
<span class="t " style="left:1658.4px;top:85.8px;color:#adadb8;font-size:12px;letter-spacing:-.12px">Effect - Ridged Settings</span>
<div class="gc" style="left:1866.800px;top:87.700px"></div><svg class="i" style="left:1866.800px;top:87.700px" width="16.200" height="16.200" viewBox="0 0 16 16"><circle cx="8" cy="8" r="5.300" fill="none" stroke="#5c5c62" stroke-width="1.200"/><rect x="7.300" y="4.600" width="1.400" height="1.500" fill="#6a6a70"/><rect x="7.300" y="7" width="1.400" height="4.300" fill="#6a6a70"/></svg>
<div class="rs" style="top:110.300px;height:1.600px;background:#474756"></div>
<div class="rs" style="top:239px"></div><div class="rs" style="top:469.500px"></div>
<svg class="i" style="left:1638.0px;top:138.5px;color:#9a9aa6;fill:#9a9aa6" width="10" height="10" viewBox="0 0 16 16"><polyline points="2.500,5.200 8,10.800 13.500,5.200" fill="none" stroke="currentColor" stroke-width="1.300"/></svg>
<span class="t h" style="left:1657.600px;top:130.9px">Presets</span>
<svg class="i" style="left:1638.0px;top:266.7px;color:#9a9aa6;fill:#9a9aa6" width="10" height="10" viewBox="0 0 16 16"><polyline points="2.500,5.200 8,10.800 13.500,5.200" fill="none" stroke="currentColor" stroke-width="1.300"/></svg>
<span class="t h" style="left:1657.600px;top:259.9px">Level Step Strengths</span>
<svg class="i" style="left:1638.0px;top:497.2px;color:#9a9aa6;fill:#9a9aa6" width="10" height="10" viewBox="0 0 16 16"><polyline points="2.500,5.200 8,10.800 13.500,5.200" fill="none" stroke="currentColor" stroke-width="1.300"/></svg>
<span class="t h" style="left:1657.600px;top:490.4px">Base Settings</span>
<div class="sl" style="top:171px"></div><div class="sr" style="top:171px"></div><span class="t w" style="left:1645.300px;top:180.6px;letter-spacing:-0.3px">Load Preset</span><span class="t w" style="left:1761.700px;top:180.6px;letter-spacing:-0.3px">Select...</span><svg class="i" style="left:1859.2px;top:185.0px;color:#c0c0c8;fill:#c0c0c8" width="11" height="11" viewBox="0 0 16 16"><polyline points="2.500,5.200 8,10.800 13.500,5.200" fill="none" stroke="currentColor" stroke-width="1.300"/></svg>
<div class="chart"></div>
<div class="gl" style="top:316.1px"></div>
<div class="gl" style="top:338.8px"></div>
<div class="gl" style="top:361.0px"></div>
<div class="gl" style="top:383.9px"></div>
<div class="gl" style="top:406.0px;background:#4a4a52"></div>
<div class="cap" style="left:1649.0px;top:397.200px;height:8.800px"></div>
<span class="cn" style="left:1645.7px">1</span>
<svg class="i" style="left:1650.9px;top:423.9px;color:#a4a4aa;fill:#a4a4aa" width="9.5" height="9.5" viewBox="0 0 16 16"><path fill-rule="evenodd" d="M8 3.2C4.6 3.2 1.800 5.200.6 8c1.200 2.800 4 4.800 7.400 4.800s6.200-2 7.400-4.800C14.200 5.200 11.400 3.200 8 3.200zm0 8A3.200 3.200 0 1 1 8 4.800a3.200 3.200 0 0 1 0 6.400zM8 6.200a1.800 1.800 0 1 0 0 3.600 1.800 1.800 0 0 0 0-3.600z"/></svg>
<div class="cap" style="left:1668.1px;top:397.200px;height:8.800px"></div>
<span class="cn" style="left:1664.7px">2</span>
<svg class="i" style="left:1670.0px;top:423.9px;color:#a4a4aa;fill:#a4a4aa" width="9.5" height="9.5" viewBox="0 0 16 16"><path fill-rule="evenodd" d="M8 3.2C4.6 3.2 1.800 5.200.6 8c1.200 2.800 4 4.800 7.400 4.800s6.200-2 7.400-4.800C14.200 5.200 11.400 3.200 8 3.200zm0 8A3.200 3.200 0 1 1 8 4.800a3.200 3.200 0 0 1 0 6.400zM8 6.200a1.800 1.800 0 1 0 0 3.600 1.800 1.800 0 0 0 0-3.600z"/></svg>
<div class="bar" style="left:1687.2px"></div><div class="cap" style="left:1687.2px;top:306px;height:8.700px"></div>
<span class="cn" style="left:1683.8px">3</span>
<svg class="i" style="left:1689.1px;top:423.9px;color:#a4a4aa;fill:#a4a4aa" width="9.5" height="9.5" viewBox="0 0 16 16"><path fill-rule="evenodd" d="M8 3.2C4.6 3.2 1.800 5.200.6 8c1.200 2.800 4 4.800 7.400 4.800s6.200-2 7.400-4.800C14.200 5.200 11.400 3.200 8 3.200zm0 8A3.200 3.200 0 1 1 8 4.800a3.200 3.200 0 0 1 0 6.400zM8 6.200a1.800 1.800 0 1 0 0 3.600 1.800 1.800 0 0 0 0-3.600z"/></svg>
<div class="bar" style="left:1706.3px"></div><div class="cap" style="left:1706.3px;top:306px;height:8.700px"></div>
<span class="cn" style="left:1702.9px">4</span>
<svg class="i" style="left:1708.2px;top:423.9px;color:#a4a4aa;fill:#a4a4aa" width="9.5" height="9.5" viewBox="0 0 16 16"><path fill-rule="evenodd" d="M8 3.2C4.6 3.2 1.800 5.200.6 8c1.200 2.800 4 4.800 7.400 4.800s6.200-2 7.400-4.800C14.200 5.200 11.400 3.200 8 3.200zm0 8A3.200 3.200 0 1 1 8 4.800a3.200 3.200 0 0 1 0 6.400zM8 6.200a1.800 1.800 0 1 0 0 3.600 1.800 1.800 0 0 0 0-3.600z"/></svg>
<div class="bar" style="left:1725.4px"></div><div class="cap" style="left:1725.4px;top:306px;height:8.700px"></div>
<span class="cn" style="left:1722.0px">5</span>
<svg class="i" style="left:1727.3px;top:423.9px;color:#a4a4aa;fill:#a4a4aa" width="9.5" height="9.5" viewBox="0 0 16 16"><path fill-rule="evenodd" d="M8 3.2C4.6 3.2 1.800 5.200.6 8c1.200 2.800 4 4.800 7.400 4.800s6.200-2 7.400-4.800C14.200 5.200 11.400 3.200 8 3.200zm0 8A3.200 3.200 0 1 1 8 4.800a3.200 3.200 0 0 1 0 6.400zM8 6.200a1.800 1.800 0 1 0 0 3.600 1.800 1.800 0 0 0 0-3.600z"/></svg>
<div class="bar" style="left:1744.5px"></div><div class="cap" style="left:1744.5px;top:306px;height:8.700px"></div>
<span class="cn" style="left:1741.1px">6</span>
<svg class="i" style="left:1746.4px;top:423.9px;color:#a4a4aa;fill:#a4a4aa" width="9.5" height="9.5" viewBox="0 0 16 16"><path fill-rule="evenodd" d="M8 3.2C4.6 3.2 1.800 5.200.6 8c1.200 2.800 4 4.800 7.400 4.800s6.200-2 7.400-4.800C14.200 5.200 11.400 3.200 8 3.200zm0 8A3.200 3.200 0 1 1 8 4.800a3.200 3.200 0 0 1 0 6.400zM8 6.200a1.800 1.800 0 1 0 0 3.600 1.800 1.800 0 0 0 0-3.600z"/></svg>
<div class="bar" style="left:1763.5px"></div><div class="cap" style="left:1763.5px;top:306px;height:8.700px"></div>
<span class="cn" style="left:1760.2px">7</span>
<svg class="i" style="left:1765.4px;top:423.9px;color:#a4a4aa;fill:#a4a4aa" width="9.5" height="9.5" viewBox="0 0 16 16"><path fill-rule="evenodd" d="M8 3.2C4.6 3.2 1.800 5.200.6 8c1.200 2.800 4 4.800 7.400 4.800s6.200-2 7.400-4.800C14.200 5.200 11.400 3.200 8 3.200zm0 8A3.200 3.200 0 1 1 8 4.800a3.200 3.200 0 0 1 0 6.400zM8 6.200a1.800 1.800 0 1 0 0 3.600 1.800 1.800 0 0 0 0-3.600z"/></svg>
<div class="bar" style="left:1782.6px"></div><div class="cap" style="left:1782.6px;top:306px;height:8.700px"></div>
<span class="cn" style="left:1779.3px">8</span>
<svg class="i" style="left:1784.5px;top:423.9px;color:#a4a4aa;fill:#a4a4aa" width="9.5" height="9.5" viewBox="0 0 16 16"><path fill-rule="evenodd" d="M8 3.2C4.6 3.2 1.800 5.200.6 8c1.200 2.800 4 4.800 7.400 4.800s6.200-2 7.400-4.800C14.200 5.200 11.400 3.200 8 3.200zm0 8A3.200 3.200 0 1 1 8 4.800a3.200 3.200 0 0 1 0 6.400zM8 6.200a1.800 1.800 0 1 0 0 3.600 1.800 1.800 0 0 0 0-3.600z"/></svg>
<div class="bar" style="left:1801.7px"></div><div class="cap" style="left:1801.7px;top:306px;height:8.700px"></div>
<span class="cn" style="left:1798.4px">9</span>
<svg class="i" style="left:1803.6px;top:423.9px;color:#a4a4aa;fill:#a4a4aa" width="9.5" height="9.5" viewBox="0 0 16 16"><path fill-rule="evenodd" d="M8 3.2C4.6 3.2 1.800 5.200.6 8c1.200 2.800 4 4.800 7.400 4.800s6.200-2 7.400-4.800C14.200 5.200 11.400 3.200 8 3.200zm0 8A3.200 3.200 0 1 1 8 4.800a3.200 3.200 0 0 1 0 6.400zM8 6.200a1.800 1.800 0 1 0 0 3.600 1.800 1.800 0 0 0 0-3.600z"/></svg>
<div class="bar" style="left:1820.8px"></div><div class="cap" style="left:1820.8px;top:306px;height:8.700px"></div>
<span class="cn" style="left:1817.5px">10</span>
<svg class="i" style="left:1822.7px;top:423.9px;color:#a4a4aa;fill:#a4a4aa" width="9.5" height="9.5" viewBox="0 0 16 16"><path fill-rule="evenodd" d="M8 3.2C4.6 3.2 1.800 5.200.6 8c1.200 2.800 4 4.800 7.400 4.800s6.200-2 7.400-4.800C14.200 5.200 11.400 3.200 8 3.200zm0 8A3.200 3.200 0 1 1 8 4.800a3.200 3.200 0 0 1 0 6.400zM8 6.200a1.800 1.800 0 1 0 0 3.600 1.800 1.800 0 0 0 0-3.600z"/></svg>
<div class="bar" style="left:1839.9px"></div><div class="cap" style="left:1839.9px;top:306px;height:8.700px"></div>
<span class="cn" style="left:1836.6px">11</span>
<svg class="i" style="left:1841.8px;top:423.9px;color:#a4a4aa;fill:#a4a4aa" width="9.5" height="9.5" viewBox="0 0 16 16"><path fill-rule="evenodd" d="M8 3.2C4.6 3.2 1.800 5.200.6 8c1.200 2.800 4 4.800 7.400 4.800s6.200-2 7.400-4.800C14.200 5.200 11.400 3.200 8 3.200zm0 8A3.200 3.200 0 1 1 8 4.800a3.200 3.200 0 0 1 0 6.400zM8 6.200a1.800 1.800 0 1 0 0 3.600 1.800 1.800 0 0 0 0-3.600z"/></svg>
<div class="bar" style="left:1859.0px"></div><div class="cap" style="left:1859.0px;top:306px;height:8.700px"></div>
<span class="cn" style="left:1855.6px">12</span>
<svg class="i" style="left:1860.9px;top:423.9px;color:#a4a4aa;fill:#a4a4aa" width="9.5" height="9.5" viewBox="0 0 16 16"><path fill-rule="evenodd" d="M8 3.2C4.6 3.2 1.800 5.200.6 8c1.200 2.800 4 4.800 7.400 4.800s6.200-2 7.400-4.800C14.200 5.200 11.400 3.200 8 3.200zm0 8A3.200 3.200 0 1 1 8 4.800a3.200 3.200 0 0 1 0 6.400zM8 6.200a1.800 1.800 0 1 0 0 3.600 1.800 1.800 0 0 0 0-3.600z"/></svg>
<div class="so" style="top:530.3px"></div><div class="sf" style="top:532.3px;width:240.3px"></div><span class="t w" style="left:1643.200px;top:529.7px">General Strength</span><span class="t w" style="left:1800px;width:74.900px;text-align:right;letter-spacing:-.3px;top:532.0px">100.00</span>
<div class="sl" style="top:560.4px"></div><div class="sr" style="top:560.4px"></div><span class="t w" style="left:1645.300px;top:569.0px;letter-spacing:-0.03px">Combine Operation</span><span class="t w" style="left:1761.700px;top:569.0px;letter-spacing:-0.03px">All</span><svg class="i" style="left:1859.2px;top:574.4px;color:#c0c0c8;fill:#c0c0c8" width="11" height="11" viewBox="0 0 16 16"><polyline points="2.500,5.200 8,10.800 13.500,5.200" fill="none" stroke="currentColor" stroke-width="1.300"/></svg>
<div class="cbx"></div><span class="t w" style="left:1673.300px;top:611px">Invert</span>
<div class="so" style="top:644.2px"></div><div class="sf" style="top:646.2px;width:117.6px"></div><span class="t w" style="left:1643.200px;top:643.6px">Ridge Strength</span><span class="t w" style="left:1800px;width:74.900px;text-align:right;letter-spacing:-.3px;top:645.9px">100.00</span>
<div class="so" style="top:674.4px"></div><div class="sf" style="top:676.4px;width:86.7px"></div><span class="t w" style="left:1643.200px;top:673.8px">Min Count</span><span class="t w" style="left:1800px;width:74.900px;text-align:right;letter-spacing:-.3px;top:676.1px">3.00</span>
<div class="so" style="top:704.4px"></div><div class="sf" style="top:706.4px;width:209.4px"></div><span class="t w" style="left:1643.200px;top:703.8px">Max Count</span><span class="t w" style="left:1800px;width:74.900px;text-align:right;letter-spacing:-.3px;top:706.1px">7.00</span>
<div class="so" style="top:734.3px"></div><span class="t w" style="left:1643.200px;top:733.7px">Min Angle</span><span class="t w" style="left:1800px;width:74.900px;text-align:right;letter-spacing:-.3px;top:736.0px">0.00</span>
<div class="so" style="top:764.3px"></div><div class="sf" style="top:766.3px;width:240.0px"></div><span class="t w" style="left:1643.200px;top:763.7px">Max Angle</span><span class="t w" style="left:1800px;width:74.900px;text-align:right;letter-spacing:-.3px;top:766.0px">90.00</span>
</body></html>
